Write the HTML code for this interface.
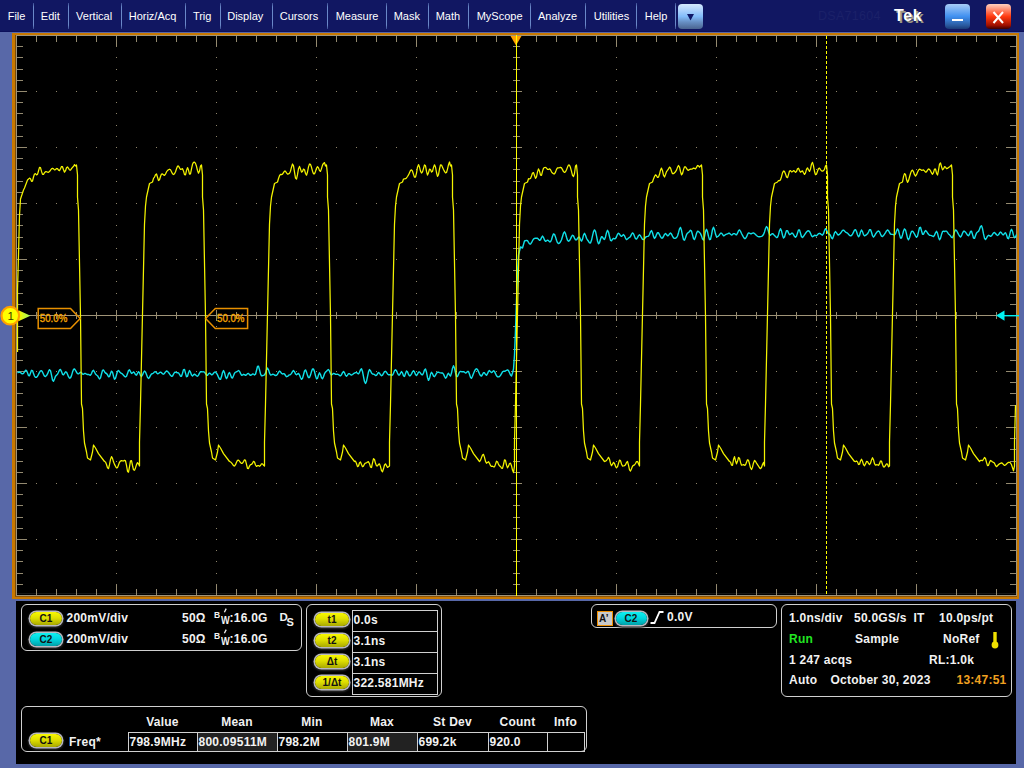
<!DOCTYPE html>
<html><head><meta charset="utf-8"><style>
*{margin:0;padding:0;box-sizing:border-box}
html,body{width:1024px;height:768px;overflow:hidden;background:#5868a8;font-family:"Liberation Sans",sans-serif}
#menu{position:absolute;left:0;top:0;width:1024px;height:32px;background:#111762;border-bottom:1px solid #0c105a}
.mi{position:absolute;top:10.5px;font-size:11px;line-height:11px;color:#fff;white-space:nowrap}
.sep{position:absolute;top:3px;width:1px;height:26px;background:linear-gradient(#3a4a90,#6a88c8 15%,#6a88c8 85%,#3a4a90)}
#panel{position:absolute;left:16px;top:601px;width:1000px;height:163px;background:#000}
.box{position:absolute;border:1px solid #d0d0d0;border-radius:6px}
.t{position:absolute;font-size:12px;line-height:12px;font-weight:bold;color:#f2f2f2;white-space:nowrap;letter-spacing:0.25px}
.badge{position:absolute;border-radius:8px;text-align:center;font-weight:bold;color:#111;box-shadow:0 0 0 1.5px #b8b8c0, 0 1px 2px 2px #2a2a2a}
.by{background:linear-gradient(#f8f800,#e0e000 45%,#a8a800)}
.bc{background:linear-gradient(#10f0f0,#00d8e0 45%,#00a0a8)}
.cell{position:absolute;border:1px solid #d0d0d0}
</style></head><body>
<div id="menu"><div class="mi" style="left:7.7px">File</div><div class="mi" style="left:40.8px">Edit</div><div class="mi" style="left:76.1px">Vertical</div><div class="mi" style="left:128.7px">Horiz/Acq</div><div class="mi" style="left:192.9px">Trig</div><div class="mi" style="left:227.2px">Display</div><div class="mi" style="left:279.7px">Cursors</div><div class="mi" style="left:335.7px">Measure</div><div class="mi" style="left:393.7px">Mask</div><div class="mi" style="left:435.7px">Math</div><div class="mi" style="left:476.7px">MyScope</div><div class="mi" style="left:538.0px">Analyze</div><div class="mi" style="left:593.7px">Utilities</div><div class="mi" style="left:644.7px">Help</div><div class="sep" style="left:33px"></div><div class="sep" style="left:68px"></div><div class="sep" style="left:121px"></div><div class="sep" style="left:185px"></div><div class="sep" style="left:220px"></div><div class="sep" style="left:272px"></div><div class="sep" style="left:327px"></div><div class="sep" style="left:386px"></div><div class="sep" style="left:428px"></div><div class="sep" style="left:468px"></div><div class="sep" style="left:530px"></div><div class="sep" style="left:585px"></div><div class="sep" style="left:636px"></div><div class="sep" style="left:675px"></div>
<div style="position:absolute;left:818px;top:10px;font-size:12.5px;line-height:12px;color:#1b2169;letter-spacing:0.3px">DSA71604</div>
<div style="position:absolute;left:896px;top:10.5px;font-size:16px;line-height:14px;font-weight:bold;color:#9c9884;letter-spacing:0.6px">Tek</div>
<div style="position:absolute;left:894px;top:8.5px;font-size:16px;line-height:14px;font-weight:bold;color:#fff;letter-spacing:0.6px">Tek</div>
<div style="position:absolute;left:678px;top:4px;width:25px;height:25px;border-radius:4px;background:linear-gradient(#d4eafe,#a6cefc 30%,#82bcfa 50%,#6890c4 72%,#4a6490)"></div>
<svg style="position:absolute;left:678px;top:4px" width="25" height="25"><path d="M9,10 H16 L12.5,16.5 Z" fill="#101868"/></svg>
<div style="position:absolute;left:945px;top:4px;width:25px;height:25px;border-radius:4px;background:linear-gradient(#a8ccf8,#4090f0 50%,#2a5aa0 85%,#1a3a78)"></div>
<div style="position:absolute;left:952px;top:19px;width:11px;height:2.4px;background:#fff"></div>
<div style="position:absolute;left:986px;top:4px;width:25px;height:25px;border-radius:4px;background:linear-gradient(#ffd0c0,#ff3a10 50%,#a01000 85%,#400000)"></div>
<svg style="position:absolute;left:986px;top:4px" width="25" height="25"><path d="M7.5,8 L17,19 M17,8 L7.5,19" stroke="#fff" stroke-width="2"/></svg>
</div>
<svg width="1024" height="768" style="position:absolute;left:0;top:0">
<rect x="12" y="33" width="1007" height="566" fill="#c87800"/>
<rect x="15" y="35" width="1" height="562" fill="#7a4a08"/>
<rect x="15" y="596" width="1002" height="1" fill="#8a5208"/>
<rect x="16" y="35" width="1001" height="561" fill="#000"/>
<g shape-rendering="crispEdges"><rect x="16" y="35" width="1001" height="1" fill="#a09478"/>
<rect x="16" y="595" width="1001" height="1" fill="#a09478"/>
<rect x="16" y="35" width="1" height="561" fill="#a09478"/>
<rect x="1016" y="35" width="1" height="561" fill="#a09478"/>
<rect x="17" y="593" width="999" height="1" fill="#161616"/>
<rect x="16" y="315" width="1001" height="1" fill="#a09478"/>
<rect x="516" y="35" width="1" height="561" fill="#a09478"/>
<rect x="36" y="36" width="1" height="6" fill="#948a70"/>
<rect x="36" y="589" width="1" height="6" fill="#948a70"/>
<rect x="36" y="312" width="1" height="7" fill="#948a70"/>
<rect x="56" y="36" width="1" height="6" fill="#948a70"/>
<rect x="56" y="589" width="1" height="6" fill="#948a70"/>
<rect x="56" y="312" width="1" height="7" fill="#948a70"/>
<rect x="76" y="36" width="1" height="6" fill="#948a70"/>
<rect x="76" y="589" width="1" height="6" fill="#948a70"/>
<rect x="76" y="312" width="1" height="7" fill="#948a70"/>
<rect x="96" y="36" width="1" height="6" fill="#948a70"/>
<rect x="96" y="589" width="1" height="6" fill="#948a70"/>
<rect x="96" y="312" width="1" height="7" fill="#948a70"/>
<rect x="116" y="36" width="1" height="10" fill="#948a70"/>
<rect x="116" y="585" width="1" height="10" fill="#948a70"/>
<rect x="116" y="310" width="1" height="11" fill="#948a70"/>
<rect x="136" y="36" width="1" height="6" fill="#948a70"/>
<rect x="136" y="589" width="1" height="6" fill="#948a70"/>
<rect x="136" y="312" width="1" height="7" fill="#948a70"/>
<rect x="156" y="36" width="1" height="6" fill="#948a70"/>
<rect x="156" y="589" width="1" height="6" fill="#948a70"/>
<rect x="156" y="312" width="1" height="7" fill="#948a70"/>
<rect x="176" y="36" width="1" height="6" fill="#948a70"/>
<rect x="176" y="589" width="1" height="6" fill="#948a70"/>
<rect x="176" y="312" width="1" height="7" fill="#948a70"/>
<rect x="196" y="36" width="1" height="6" fill="#948a70"/>
<rect x="196" y="589" width="1" height="6" fill="#948a70"/>
<rect x="196" y="312" width="1" height="7" fill="#948a70"/>
<rect x="216" y="36" width="1" height="10" fill="#948a70"/>
<rect x="216" y="585" width="1" height="10" fill="#948a70"/>
<rect x="216" y="310" width="1" height="11" fill="#948a70"/>
<rect x="236" y="36" width="1" height="6" fill="#948a70"/>
<rect x="236" y="589" width="1" height="6" fill="#948a70"/>
<rect x="236" y="312" width="1" height="7" fill="#948a70"/>
<rect x="256" y="36" width="1" height="6" fill="#948a70"/>
<rect x="256" y="589" width="1" height="6" fill="#948a70"/>
<rect x="256" y="312" width="1" height="7" fill="#948a70"/>
<rect x="276" y="36" width="1" height="6" fill="#948a70"/>
<rect x="276" y="589" width="1" height="6" fill="#948a70"/>
<rect x="276" y="312" width="1" height="7" fill="#948a70"/>
<rect x="296" y="36" width="1" height="6" fill="#948a70"/>
<rect x="296" y="589" width="1" height="6" fill="#948a70"/>
<rect x="296" y="312" width="1" height="7" fill="#948a70"/>
<rect x="316" y="36" width="1" height="10" fill="#948a70"/>
<rect x="316" y="585" width="1" height="10" fill="#948a70"/>
<rect x="316" y="310" width="1" height="11" fill="#948a70"/>
<rect x="336" y="36" width="1" height="6" fill="#948a70"/>
<rect x="336" y="589" width="1" height="6" fill="#948a70"/>
<rect x="336" y="312" width="1" height="7" fill="#948a70"/>
<rect x="356" y="36" width="1" height="6" fill="#948a70"/>
<rect x="356" y="589" width="1" height="6" fill="#948a70"/>
<rect x="356" y="312" width="1" height="7" fill="#948a70"/>
<rect x="376" y="36" width="1" height="6" fill="#948a70"/>
<rect x="376" y="589" width="1" height="6" fill="#948a70"/>
<rect x="376" y="312" width="1" height="7" fill="#948a70"/>
<rect x="396" y="36" width="1" height="6" fill="#948a70"/>
<rect x="396" y="589" width="1" height="6" fill="#948a70"/>
<rect x="396" y="312" width="1" height="7" fill="#948a70"/>
<rect x="416" y="36" width="1" height="10" fill="#948a70"/>
<rect x="416" y="585" width="1" height="10" fill="#948a70"/>
<rect x="416" y="310" width="1" height="11" fill="#948a70"/>
<rect x="436" y="36" width="1" height="6" fill="#948a70"/>
<rect x="436" y="589" width="1" height="6" fill="#948a70"/>
<rect x="436" y="312" width="1" height="7" fill="#948a70"/>
<rect x="456" y="36" width="1" height="6" fill="#948a70"/>
<rect x="456" y="589" width="1" height="6" fill="#948a70"/>
<rect x="456" y="312" width="1" height="7" fill="#948a70"/>
<rect x="476" y="36" width="1" height="6" fill="#948a70"/>
<rect x="476" y="589" width="1" height="6" fill="#948a70"/>
<rect x="476" y="312" width="1" height="7" fill="#948a70"/>
<rect x="496" y="36" width="1" height="6" fill="#948a70"/>
<rect x="496" y="589" width="1" height="6" fill="#948a70"/>
<rect x="496" y="312" width="1" height="7" fill="#948a70"/>
<rect x="516" y="36" width="1" height="10" fill="#948a70"/>
<rect x="516" y="585" width="1" height="10" fill="#948a70"/>
<rect x="536" y="36" width="1" height="6" fill="#948a70"/>
<rect x="536" y="589" width="1" height="6" fill="#948a70"/>
<rect x="536" y="312" width="1" height="7" fill="#948a70"/>
<rect x="556" y="36" width="1" height="6" fill="#948a70"/>
<rect x="556" y="589" width="1" height="6" fill="#948a70"/>
<rect x="556" y="312" width="1" height="7" fill="#948a70"/>
<rect x="576" y="36" width="1" height="6" fill="#948a70"/>
<rect x="576" y="589" width="1" height="6" fill="#948a70"/>
<rect x="576" y="312" width="1" height="7" fill="#948a70"/>
<rect x="596" y="36" width="1" height="6" fill="#948a70"/>
<rect x="596" y="589" width="1" height="6" fill="#948a70"/>
<rect x="596" y="312" width="1" height="7" fill="#948a70"/>
<rect x="616" y="36" width="1" height="10" fill="#948a70"/>
<rect x="616" y="585" width="1" height="10" fill="#948a70"/>
<rect x="616" y="310" width="1" height="11" fill="#948a70"/>
<rect x="636" y="36" width="1" height="6" fill="#948a70"/>
<rect x="636" y="589" width="1" height="6" fill="#948a70"/>
<rect x="636" y="312" width="1" height="7" fill="#948a70"/>
<rect x="656" y="36" width="1" height="6" fill="#948a70"/>
<rect x="656" y="589" width="1" height="6" fill="#948a70"/>
<rect x="656" y="312" width="1" height="7" fill="#948a70"/>
<rect x="676" y="36" width="1" height="6" fill="#948a70"/>
<rect x="676" y="589" width="1" height="6" fill="#948a70"/>
<rect x="676" y="312" width="1" height="7" fill="#948a70"/>
<rect x="696" y="36" width="1" height="6" fill="#948a70"/>
<rect x="696" y="589" width="1" height="6" fill="#948a70"/>
<rect x="696" y="312" width="1" height="7" fill="#948a70"/>
<rect x="716" y="36" width="1" height="10" fill="#948a70"/>
<rect x="716" y="585" width="1" height="10" fill="#948a70"/>
<rect x="716" y="310" width="1" height="11" fill="#948a70"/>
<rect x="736" y="36" width="1" height="6" fill="#948a70"/>
<rect x="736" y="589" width="1" height="6" fill="#948a70"/>
<rect x="736" y="312" width="1" height="7" fill="#948a70"/>
<rect x="756" y="36" width="1" height="6" fill="#948a70"/>
<rect x="756" y="589" width="1" height="6" fill="#948a70"/>
<rect x="756" y="312" width="1" height="7" fill="#948a70"/>
<rect x="776" y="36" width="1" height="6" fill="#948a70"/>
<rect x="776" y="589" width="1" height="6" fill="#948a70"/>
<rect x="776" y="312" width="1" height="7" fill="#948a70"/>
<rect x="796" y="36" width="1" height="6" fill="#948a70"/>
<rect x="796" y="589" width="1" height="6" fill="#948a70"/>
<rect x="796" y="312" width="1" height="7" fill="#948a70"/>
<rect x="816" y="36" width="1" height="10" fill="#948a70"/>
<rect x="816" y="585" width="1" height="10" fill="#948a70"/>
<rect x="816" y="310" width="1" height="11" fill="#948a70"/>
<rect x="836" y="36" width="1" height="6" fill="#948a70"/>
<rect x="836" y="589" width="1" height="6" fill="#948a70"/>
<rect x="836" y="312" width="1" height="7" fill="#948a70"/>
<rect x="856" y="36" width="1" height="6" fill="#948a70"/>
<rect x="856" y="589" width="1" height="6" fill="#948a70"/>
<rect x="856" y="312" width="1" height="7" fill="#948a70"/>
<rect x="876" y="36" width="1" height="6" fill="#948a70"/>
<rect x="876" y="589" width="1" height="6" fill="#948a70"/>
<rect x="876" y="312" width="1" height="7" fill="#948a70"/>
<rect x="896" y="36" width="1" height="6" fill="#948a70"/>
<rect x="896" y="589" width="1" height="6" fill="#948a70"/>
<rect x="896" y="312" width="1" height="7" fill="#948a70"/>
<rect x="916" y="36" width="1" height="10" fill="#948a70"/>
<rect x="916" y="585" width="1" height="10" fill="#948a70"/>
<rect x="916" y="310" width="1" height="11" fill="#948a70"/>
<rect x="936" y="36" width="1" height="6" fill="#948a70"/>
<rect x="936" y="589" width="1" height="6" fill="#948a70"/>
<rect x="936" y="312" width="1" height="7" fill="#948a70"/>
<rect x="956" y="36" width="1" height="6" fill="#948a70"/>
<rect x="956" y="589" width="1" height="6" fill="#948a70"/>
<rect x="956" y="312" width="1" height="7" fill="#948a70"/>
<rect x="976" y="36" width="1" height="6" fill="#948a70"/>
<rect x="976" y="589" width="1" height="6" fill="#948a70"/>
<rect x="976" y="312" width="1" height="7" fill="#948a70"/>
<rect x="996" y="36" width="1" height="6" fill="#948a70"/>
<rect x="996" y="589" width="1" height="6" fill="#948a70"/>
<rect x="996" y="312" width="1" height="7" fill="#948a70"/>
<rect x="17" y="46" width="6" height="1" fill="#948a70"/>
<rect x="1010" y="46" width="6" height="1" fill="#948a70"/>
<rect x="513" y="46" width="7" height="1" fill="#948a70"/>
<rect x="17" y="57" width="6" height="1" fill="#948a70"/>
<rect x="1010" y="57" width="6" height="1" fill="#948a70"/>
<rect x="513" y="57" width="7" height="1" fill="#948a70"/>
<rect x="17" y="69" width="6" height="1" fill="#948a70"/>
<rect x="1010" y="69" width="6" height="1" fill="#948a70"/>
<rect x="513" y="69" width="7" height="1" fill="#948a70"/>
<rect x="17" y="80" width="6" height="1" fill="#948a70"/>
<rect x="1010" y="80" width="6" height="1" fill="#948a70"/>
<rect x="513" y="80" width="7" height="1" fill="#948a70"/>
<rect x="17" y="91" width="10" height="1" fill="#948a70"/>
<rect x="1006" y="91" width="10" height="1" fill="#948a70"/>
<rect x="511" y="91" width="11" height="1" fill="#948a70"/>
<rect x="17" y="102" width="6" height="1" fill="#948a70"/>
<rect x="1010" y="102" width="6" height="1" fill="#948a70"/>
<rect x="513" y="102" width="7" height="1" fill="#948a70"/>
<rect x="17" y="113" width="6" height="1" fill="#948a70"/>
<rect x="1010" y="113" width="6" height="1" fill="#948a70"/>
<rect x="513" y="113" width="7" height="1" fill="#948a70"/>
<rect x="17" y="125" width="6" height="1" fill="#948a70"/>
<rect x="1010" y="125" width="6" height="1" fill="#948a70"/>
<rect x="513" y="125" width="7" height="1" fill="#948a70"/>
<rect x="17" y="136" width="6" height="1" fill="#948a70"/>
<rect x="1010" y="136" width="6" height="1" fill="#948a70"/>
<rect x="513" y="136" width="7" height="1" fill="#948a70"/>
<rect x="17" y="147" width="10" height="1" fill="#948a70"/>
<rect x="1006" y="147" width="10" height="1" fill="#948a70"/>
<rect x="511" y="147" width="11" height="1" fill="#948a70"/>
<rect x="17" y="158" width="6" height="1" fill="#948a70"/>
<rect x="1010" y="158" width="6" height="1" fill="#948a70"/>
<rect x="513" y="158" width="7" height="1" fill="#948a70"/>
<rect x="17" y="169" width="6" height="1" fill="#948a70"/>
<rect x="1010" y="169" width="6" height="1" fill="#948a70"/>
<rect x="513" y="169" width="7" height="1" fill="#948a70"/>
<rect x="17" y="181" width="6" height="1" fill="#948a70"/>
<rect x="1010" y="181" width="6" height="1" fill="#948a70"/>
<rect x="513" y="181" width="7" height="1" fill="#948a70"/>
<rect x="17" y="192" width="6" height="1" fill="#948a70"/>
<rect x="1010" y="192" width="6" height="1" fill="#948a70"/>
<rect x="513" y="192" width="7" height="1" fill="#948a70"/>
<rect x="17" y="203" width="10" height="1" fill="#948a70"/>
<rect x="1006" y="203" width="10" height="1" fill="#948a70"/>
<rect x="511" y="203" width="11" height="1" fill="#948a70"/>
<rect x="17" y="214" width="6" height="1" fill="#948a70"/>
<rect x="1010" y="214" width="6" height="1" fill="#948a70"/>
<rect x="513" y="214" width="7" height="1" fill="#948a70"/>
<rect x="17" y="225" width="6" height="1" fill="#948a70"/>
<rect x="1010" y="225" width="6" height="1" fill="#948a70"/>
<rect x="513" y="225" width="7" height="1" fill="#948a70"/>
<rect x="17" y="237" width="6" height="1" fill="#948a70"/>
<rect x="1010" y="237" width="6" height="1" fill="#948a70"/>
<rect x="513" y="237" width="7" height="1" fill="#948a70"/>
<rect x="17" y="248" width="6" height="1" fill="#948a70"/>
<rect x="1010" y="248" width="6" height="1" fill="#948a70"/>
<rect x="513" y="248" width="7" height="1" fill="#948a70"/>
<rect x="17" y="259" width="10" height="1" fill="#948a70"/>
<rect x="1006" y="259" width="10" height="1" fill="#948a70"/>
<rect x="511" y="259" width="11" height="1" fill="#948a70"/>
<rect x="17" y="270" width="6" height="1" fill="#948a70"/>
<rect x="1010" y="270" width="6" height="1" fill="#948a70"/>
<rect x="513" y="270" width="7" height="1" fill="#948a70"/>
<rect x="17" y="281" width="6" height="1" fill="#948a70"/>
<rect x="1010" y="281" width="6" height="1" fill="#948a70"/>
<rect x="513" y="281" width="7" height="1" fill="#948a70"/>
<rect x="17" y="293" width="6" height="1" fill="#948a70"/>
<rect x="1010" y="293" width="6" height="1" fill="#948a70"/>
<rect x="513" y="293" width="7" height="1" fill="#948a70"/>
<rect x="17" y="304" width="6" height="1" fill="#948a70"/>
<rect x="1010" y="304" width="6" height="1" fill="#948a70"/>
<rect x="513" y="304" width="7" height="1" fill="#948a70"/>
<rect x="17" y="315" width="10" height="1" fill="#948a70"/>
<rect x="1006" y="315" width="10" height="1" fill="#948a70"/>
<rect x="17" y="326" width="6" height="1" fill="#948a70"/>
<rect x="1010" y="326" width="6" height="1" fill="#948a70"/>
<rect x="513" y="326" width="7" height="1" fill="#948a70"/>
<rect x="17" y="337" width="6" height="1" fill="#948a70"/>
<rect x="1010" y="337" width="6" height="1" fill="#948a70"/>
<rect x="513" y="337" width="7" height="1" fill="#948a70"/>
<rect x="17" y="349" width="6" height="1" fill="#948a70"/>
<rect x="1010" y="349" width="6" height="1" fill="#948a70"/>
<rect x="513" y="349" width="7" height="1" fill="#948a70"/>
<rect x="17" y="360" width="6" height="1" fill="#948a70"/>
<rect x="1010" y="360" width="6" height="1" fill="#948a70"/>
<rect x="513" y="360" width="7" height="1" fill="#948a70"/>
<rect x="17" y="371" width="10" height="1" fill="#948a70"/>
<rect x="1006" y="371" width="10" height="1" fill="#948a70"/>
<rect x="511" y="371" width="11" height="1" fill="#948a70"/>
<rect x="17" y="382" width="6" height="1" fill="#948a70"/>
<rect x="1010" y="382" width="6" height="1" fill="#948a70"/>
<rect x="513" y="382" width="7" height="1" fill="#948a70"/>
<rect x="17" y="393" width="6" height="1" fill="#948a70"/>
<rect x="1010" y="393" width="6" height="1" fill="#948a70"/>
<rect x="513" y="393" width="7" height="1" fill="#948a70"/>
<rect x="17" y="405" width="6" height="1" fill="#948a70"/>
<rect x="1010" y="405" width="6" height="1" fill="#948a70"/>
<rect x="513" y="405" width="7" height="1" fill="#948a70"/>
<rect x="17" y="416" width="6" height="1" fill="#948a70"/>
<rect x="1010" y="416" width="6" height="1" fill="#948a70"/>
<rect x="513" y="416" width="7" height="1" fill="#948a70"/>
<rect x="17" y="427" width="10" height="1" fill="#948a70"/>
<rect x="1006" y="427" width="10" height="1" fill="#948a70"/>
<rect x="511" y="427" width="11" height="1" fill="#948a70"/>
<rect x="17" y="438" width="6" height="1" fill="#948a70"/>
<rect x="1010" y="438" width="6" height="1" fill="#948a70"/>
<rect x="513" y="438" width="7" height="1" fill="#948a70"/>
<rect x="17" y="449" width="6" height="1" fill="#948a70"/>
<rect x="1010" y="449" width="6" height="1" fill="#948a70"/>
<rect x="513" y="449" width="7" height="1" fill="#948a70"/>
<rect x="17" y="461" width="6" height="1" fill="#948a70"/>
<rect x="1010" y="461" width="6" height="1" fill="#948a70"/>
<rect x="513" y="461" width="7" height="1" fill="#948a70"/>
<rect x="17" y="472" width="6" height="1" fill="#948a70"/>
<rect x="1010" y="472" width="6" height="1" fill="#948a70"/>
<rect x="513" y="472" width="7" height="1" fill="#948a70"/>
<rect x="17" y="483" width="10" height="1" fill="#948a70"/>
<rect x="1006" y="483" width="10" height="1" fill="#948a70"/>
<rect x="511" y="483" width="11" height="1" fill="#948a70"/>
<rect x="17" y="494" width="6" height="1" fill="#948a70"/>
<rect x="1010" y="494" width="6" height="1" fill="#948a70"/>
<rect x="513" y="494" width="7" height="1" fill="#948a70"/>
<rect x="17" y="505" width="6" height="1" fill="#948a70"/>
<rect x="1010" y="505" width="6" height="1" fill="#948a70"/>
<rect x="513" y="505" width="7" height="1" fill="#948a70"/>
<rect x="17" y="517" width="6" height="1" fill="#948a70"/>
<rect x="1010" y="517" width="6" height="1" fill="#948a70"/>
<rect x="513" y="517" width="7" height="1" fill="#948a70"/>
<rect x="17" y="528" width="6" height="1" fill="#948a70"/>
<rect x="1010" y="528" width="6" height="1" fill="#948a70"/>
<rect x="513" y="528" width="7" height="1" fill="#948a70"/>
<rect x="17" y="539" width="10" height="1" fill="#948a70"/>
<rect x="1006" y="539" width="10" height="1" fill="#948a70"/>
<rect x="511" y="539" width="11" height="1" fill="#948a70"/>
<rect x="17" y="550" width="6" height="1" fill="#948a70"/>
<rect x="1010" y="550" width="6" height="1" fill="#948a70"/>
<rect x="513" y="550" width="7" height="1" fill="#948a70"/>
<rect x="17" y="561" width="6" height="1" fill="#948a70"/>
<rect x="1010" y="561" width="6" height="1" fill="#948a70"/>
<rect x="513" y="561" width="7" height="1" fill="#948a70"/>
<rect x="17" y="573" width="6" height="1" fill="#948a70"/>
<rect x="1010" y="573" width="6" height="1" fill="#948a70"/>
<rect x="513" y="573" width="7" height="1" fill="#948a70"/>
<rect x="17" y="584" width="6" height="1" fill="#948a70"/>
<rect x="1010" y="584" width="6" height="1" fill="#948a70"/>
<rect x="513" y="584" width="7" height="1" fill="#948a70"/><path fill="#8e846a" d="M116 46h1v1h-1zM116 57h1v1h-1zM116 69h1v1h-1zM116 80h1v1h-1zM116 91h1v1h-1zM116 102h1v1h-1zM116 113h1v1h-1zM116 125h1v1h-1zM116 136h1v1h-1zM116 147h1v1h-1zM116 158h1v1h-1zM116 169h1v1h-1zM116 181h1v1h-1zM116 192h1v1h-1zM116 203h1v1h-1zM116 214h1v1h-1zM116 225h1v1h-1zM116 237h1v1h-1zM116 248h1v1h-1zM116 259h1v1h-1zM116 270h1v1h-1zM116 281h1v1h-1zM116 293h1v1h-1zM116 304h1v1h-1zM116 326h1v1h-1zM116 337h1v1h-1zM116 349h1v1h-1zM116 360h1v1h-1zM116 371h1v1h-1zM116 382h1v1h-1zM116 393h1v1h-1zM116 405h1v1h-1zM116 416h1v1h-1zM116 427h1v1h-1zM116 438h1v1h-1zM116 449h1v1h-1zM116 461h1v1h-1zM116 472h1v1h-1zM116 483h1v1h-1zM116 494h1v1h-1zM116 505h1v1h-1zM116 517h1v1h-1zM116 528h1v1h-1zM116 539h1v1h-1zM116 550h1v1h-1zM116 561h1v1h-1zM116 573h1v1h-1zM116 584h1v1h-1zM216 46h1v1h-1zM216 57h1v1h-1zM216 69h1v1h-1zM216 80h1v1h-1zM216 91h1v1h-1zM216 102h1v1h-1zM216 113h1v1h-1zM216 125h1v1h-1zM216 136h1v1h-1zM216 147h1v1h-1zM216 158h1v1h-1zM216 169h1v1h-1zM216 181h1v1h-1zM216 192h1v1h-1zM216 203h1v1h-1zM216 214h1v1h-1zM216 225h1v1h-1zM216 237h1v1h-1zM216 248h1v1h-1zM216 259h1v1h-1zM216 270h1v1h-1zM216 281h1v1h-1zM216 293h1v1h-1zM216 304h1v1h-1zM216 326h1v1h-1zM216 337h1v1h-1zM216 349h1v1h-1zM216 360h1v1h-1zM216 371h1v1h-1zM216 382h1v1h-1zM216 393h1v1h-1zM216 405h1v1h-1zM216 416h1v1h-1zM216 427h1v1h-1zM216 438h1v1h-1zM216 449h1v1h-1zM216 461h1v1h-1zM216 472h1v1h-1zM216 483h1v1h-1zM216 494h1v1h-1zM216 505h1v1h-1zM216 517h1v1h-1zM216 528h1v1h-1zM216 539h1v1h-1zM216 550h1v1h-1zM216 561h1v1h-1zM216 573h1v1h-1zM216 584h1v1h-1zM316 46h1v1h-1zM316 57h1v1h-1zM316 69h1v1h-1zM316 80h1v1h-1zM316 91h1v1h-1zM316 102h1v1h-1zM316 113h1v1h-1zM316 125h1v1h-1zM316 136h1v1h-1zM316 147h1v1h-1zM316 158h1v1h-1zM316 169h1v1h-1zM316 181h1v1h-1zM316 192h1v1h-1zM316 203h1v1h-1zM316 214h1v1h-1zM316 225h1v1h-1zM316 237h1v1h-1zM316 248h1v1h-1zM316 259h1v1h-1zM316 270h1v1h-1zM316 281h1v1h-1zM316 293h1v1h-1zM316 304h1v1h-1zM316 326h1v1h-1zM316 337h1v1h-1zM316 349h1v1h-1zM316 360h1v1h-1zM316 371h1v1h-1zM316 382h1v1h-1zM316 393h1v1h-1zM316 405h1v1h-1zM316 416h1v1h-1zM316 427h1v1h-1zM316 438h1v1h-1zM316 449h1v1h-1zM316 461h1v1h-1zM316 472h1v1h-1zM316 483h1v1h-1zM316 494h1v1h-1zM316 505h1v1h-1zM316 517h1v1h-1zM316 528h1v1h-1zM316 539h1v1h-1zM316 550h1v1h-1zM316 561h1v1h-1zM316 573h1v1h-1zM316 584h1v1h-1zM416 46h1v1h-1zM416 57h1v1h-1zM416 69h1v1h-1zM416 80h1v1h-1zM416 91h1v1h-1zM416 102h1v1h-1zM416 113h1v1h-1zM416 125h1v1h-1zM416 136h1v1h-1zM416 147h1v1h-1zM416 158h1v1h-1zM416 169h1v1h-1zM416 181h1v1h-1zM416 192h1v1h-1zM416 203h1v1h-1zM416 214h1v1h-1zM416 225h1v1h-1zM416 237h1v1h-1zM416 248h1v1h-1zM416 259h1v1h-1zM416 270h1v1h-1zM416 281h1v1h-1zM416 293h1v1h-1zM416 304h1v1h-1zM416 326h1v1h-1zM416 337h1v1h-1zM416 349h1v1h-1zM416 360h1v1h-1zM416 371h1v1h-1zM416 382h1v1h-1zM416 393h1v1h-1zM416 405h1v1h-1zM416 416h1v1h-1zM416 427h1v1h-1zM416 438h1v1h-1zM416 449h1v1h-1zM416 461h1v1h-1zM416 472h1v1h-1zM416 483h1v1h-1zM416 494h1v1h-1zM416 505h1v1h-1zM416 517h1v1h-1zM416 528h1v1h-1zM416 539h1v1h-1zM416 550h1v1h-1zM416 561h1v1h-1zM416 573h1v1h-1zM416 584h1v1h-1zM616 46h1v1h-1zM616 57h1v1h-1zM616 69h1v1h-1zM616 80h1v1h-1zM616 91h1v1h-1zM616 102h1v1h-1zM616 113h1v1h-1zM616 125h1v1h-1zM616 136h1v1h-1zM616 147h1v1h-1zM616 158h1v1h-1zM616 169h1v1h-1zM616 181h1v1h-1zM616 192h1v1h-1zM616 203h1v1h-1zM616 214h1v1h-1zM616 225h1v1h-1zM616 237h1v1h-1zM616 248h1v1h-1zM616 259h1v1h-1zM616 270h1v1h-1zM616 281h1v1h-1zM616 293h1v1h-1zM616 304h1v1h-1zM616 326h1v1h-1zM616 337h1v1h-1zM616 349h1v1h-1zM616 360h1v1h-1zM616 371h1v1h-1zM616 382h1v1h-1zM616 393h1v1h-1zM616 405h1v1h-1zM616 416h1v1h-1zM616 427h1v1h-1zM616 438h1v1h-1zM616 449h1v1h-1zM616 461h1v1h-1zM616 472h1v1h-1zM616 483h1v1h-1zM616 494h1v1h-1zM616 505h1v1h-1zM616 517h1v1h-1zM616 528h1v1h-1zM616 539h1v1h-1zM616 550h1v1h-1zM616 561h1v1h-1zM616 573h1v1h-1zM616 584h1v1h-1zM716 46h1v1h-1zM716 57h1v1h-1zM716 69h1v1h-1zM716 80h1v1h-1zM716 91h1v1h-1zM716 102h1v1h-1zM716 113h1v1h-1zM716 125h1v1h-1zM716 136h1v1h-1zM716 147h1v1h-1zM716 158h1v1h-1zM716 169h1v1h-1zM716 181h1v1h-1zM716 192h1v1h-1zM716 203h1v1h-1zM716 214h1v1h-1zM716 225h1v1h-1zM716 237h1v1h-1zM716 248h1v1h-1zM716 259h1v1h-1zM716 270h1v1h-1zM716 281h1v1h-1zM716 293h1v1h-1zM716 304h1v1h-1zM716 326h1v1h-1zM716 337h1v1h-1zM716 349h1v1h-1zM716 360h1v1h-1zM716 371h1v1h-1zM716 382h1v1h-1zM716 393h1v1h-1zM716 405h1v1h-1zM716 416h1v1h-1zM716 427h1v1h-1zM716 438h1v1h-1zM716 449h1v1h-1zM716 461h1v1h-1zM716 472h1v1h-1zM716 483h1v1h-1zM716 494h1v1h-1zM716 505h1v1h-1zM716 517h1v1h-1zM716 528h1v1h-1zM716 539h1v1h-1zM716 550h1v1h-1zM716 561h1v1h-1zM716 573h1v1h-1zM716 584h1v1h-1zM816 46h1v1h-1zM816 57h1v1h-1zM816 69h1v1h-1zM816 80h1v1h-1zM816 91h1v1h-1zM816 102h1v1h-1zM816 113h1v1h-1zM816 125h1v1h-1zM816 136h1v1h-1zM816 147h1v1h-1zM816 158h1v1h-1zM816 169h1v1h-1zM816 181h1v1h-1zM816 192h1v1h-1zM816 203h1v1h-1zM816 214h1v1h-1zM816 225h1v1h-1zM816 237h1v1h-1zM816 248h1v1h-1zM816 259h1v1h-1zM816 270h1v1h-1zM816 281h1v1h-1zM816 293h1v1h-1zM816 304h1v1h-1zM816 326h1v1h-1zM816 337h1v1h-1zM816 349h1v1h-1zM816 360h1v1h-1zM816 371h1v1h-1zM816 382h1v1h-1zM816 393h1v1h-1zM816 405h1v1h-1zM816 416h1v1h-1zM816 427h1v1h-1zM816 438h1v1h-1zM816 449h1v1h-1zM816 461h1v1h-1zM816 472h1v1h-1zM816 483h1v1h-1zM816 494h1v1h-1zM816 505h1v1h-1zM816 517h1v1h-1zM816 528h1v1h-1zM816 539h1v1h-1zM816 550h1v1h-1zM816 561h1v1h-1zM816 573h1v1h-1zM816 584h1v1h-1zM916 46h1v1h-1zM916 57h1v1h-1zM916 69h1v1h-1zM916 80h1v1h-1zM916 91h1v1h-1zM916 102h1v1h-1zM916 113h1v1h-1zM916 125h1v1h-1zM916 136h1v1h-1zM916 147h1v1h-1zM916 158h1v1h-1zM916 169h1v1h-1zM916 181h1v1h-1zM916 192h1v1h-1zM916 203h1v1h-1zM916 214h1v1h-1zM916 225h1v1h-1zM916 237h1v1h-1zM916 248h1v1h-1zM916 259h1v1h-1zM916 270h1v1h-1zM916 281h1v1h-1zM916 293h1v1h-1zM916 304h1v1h-1zM916 326h1v1h-1zM916 337h1v1h-1zM916 349h1v1h-1zM916 360h1v1h-1zM916 371h1v1h-1zM916 382h1v1h-1zM916 393h1v1h-1zM916 405h1v1h-1zM916 416h1v1h-1zM916 427h1v1h-1zM916 438h1v1h-1zM916 449h1v1h-1zM916 461h1v1h-1zM916 472h1v1h-1zM916 483h1v1h-1zM916 494h1v1h-1zM916 505h1v1h-1zM916 517h1v1h-1zM916 528h1v1h-1zM916 539h1v1h-1zM916 550h1v1h-1zM916 561h1v1h-1zM916 573h1v1h-1zM916 584h1v1h-1zM36 91h1v1h-1zM56 91h1v1h-1zM76 91h1v1h-1zM96 91h1v1h-1zM136 91h1v1h-1zM156 91h1v1h-1zM176 91h1v1h-1zM196 91h1v1h-1zM236 91h1v1h-1zM256 91h1v1h-1zM276 91h1v1h-1zM296 91h1v1h-1zM336 91h1v1h-1zM356 91h1v1h-1zM376 91h1v1h-1zM396 91h1v1h-1zM436 91h1v1h-1zM456 91h1v1h-1zM476 91h1v1h-1zM496 91h1v1h-1zM536 91h1v1h-1zM556 91h1v1h-1zM576 91h1v1h-1zM596 91h1v1h-1zM636 91h1v1h-1zM656 91h1v1h-1zM676 91h1v1h-1zM696 91h1v1h-1zM736 91h1v1h-1zM756 91h1v1h-1zM776 91h1v1h-1zM796 91h1v1h-1zM836 91h1v1h-1zM856 91h1v1h-1zM876 91h1v1h-1zM896 91h1v1h-1zM936 91h1v1h-1zM956 91h1v1h-1zM976 91h1v1h-1zM996 91h1v1h-1zM36 147h1v1h-1zM56 147h1v1h-1zM76 147h1v1h-1zM96 147h1v1h-1zM136 147h1v1h-1zM156 147h1v1h-1zM176 147h1v1h-1zM196 147h1v1h-1zM236 147h1v1h-1zM256 147h1v1h-1zM276 147h1v1h-1zM296 147h1v1h-1zM336 147h1v1h-1zM356 147h1v1h-1zM376 147h1v1h-1zM396 147h1v1h-1zM436 147h1v1h-1zM456 147h1v1h-1zM476 147h1v1h-1zM496 147h1v1h-1zM536 147h1v1h-1zM556 147h1v1h-1zM576 147h1v1h-1zM596 147h1v1h-1zM636 147h1v1h-1zM656 147h1v1h-1zM676 147h1v1h-1zM696 147h1v1h-1zM736 147h1v1h-1zM756 147h1v1h-1zM776 147h1v1h-1zM796 147h1v1h-1zM836 147h1v1h-1zM856 147h1v1h-1zM876 147h1v1h-1zM896 147h1v1h-1zM936 147h1v1h-1zM956 147h1v1h-1zM976 147h1v1h-1zM996 147h1v1h-1zM36 203h1v1h-1zM56 203h1v1h-1zM76 203h1v1h-1zM96 203h1v1h-1zM136 203h1v1h-1zM156 203h1v1h-1zM176 203h1v1h-1zM196 203h1v1h-1zM236 203h1v1h-1zM256 203h1v1h-1zM276 203h1v1h-1zM296 203h1v1h-1zM336 203h1v1h-1zM356 203h1v1h-1zM376 203h1v1h-1zM396 203h1v1h-1zM436 203h1v1h-1zM456 203h1v1h-1zM476 203h1v1h-1zM496 203h1v1h-1zM536 203h1v1h-1zM556 203h1v1h-1zM576 203h1v1h-1zM596 203h1v1h-1zM636 203h1v1h-1zM656 203h1v1h-1zM676 203h1v1h-1zM696 203h1v1h-1zM736 203h1v1h-1zM756 203h1v1h-1zM776 203h1v1h-1zM796 203h1v1h-1zM836 203h1v1h-1zM856 203h1v1h-1zM876 203h1v1h-1zM896 203h1v1h-1zM936 203h1v1h-1zM956 203h1v1h-1zM976 203h1v1h-1zM996 203h1v1h-1zM36 259h1v1h-1zM56 259h1v1h-1zM76 259h1v1h-1zM96 259h1v1h-1zM136 259h1v1h-1zM156 259h1v1h-1zM176 259h1v1h-1zM196 259h1v1h-1zM236 259h1v1h-1zM256 259h1v1h-1zM276 259h1v1h-1zM296 259h1v1h-1zM336 259h1v1h-1zM356 259h1v1h-1zM376 259h1v1h-1zM396 259h1v1h-1zM436 259h1v1h-1zM456 259h1v1h-1zM476 259h1v1h-1zM496 259h1v1h-1zM536 259h1v1h-1zM556 259h1v1h-1zM576 259h1v1h-1zM596 259h1v1h-1zM636 259h1v1h-1zM656 259h1v1h-1zM676 259h1v1h-1zM696 259h1v1h-1zM736 259h1v1h-1zM756 259h1v1h-1zM776 259h1v1h-1zM796 259h1v1h-1zM836 259h1v1h-1zM856 259h1v1h-1zM876 259h1v1h-1zM896 259h1v1h-1zM936 259h1v1h-1zM956 259h1v1h-1zM976 259h1v1h-1zM996 259h1v1h-1zM36 371h1v1h-1zM56 371h1v1h-1zM76 371h1v1h-1zM96 371h1v1h-1zM136 371h1v1h-1zM156 371h1v1h-1zM176 371h1v1h-1zM196 371h1v1h-1zM236 371h1v1h-1zM256 371h1v1h-1zM276 371h1v1h-1zM296 371h1v1h-1zM336 371h1v1h-1zM356 371h1v1h-1zM376 371h1v1h-1zM396 371h1v1h-1zM436 371h1v1h-1zM456 371h1v1h-1zM476 371h1v1h-1zM496 371h1v1h-1zM536 371h1v1h-1zM556 371h1v1h-1zM576 371h1v1h-1zM596 371h1v1h-1zM636 371h1v1h-1zM656 371h1v1h-1zM676 371h1v1h-1zM696 371h1v1h-1zM736 371h1v1h-1zM756 371h1v1h-1zM776 371h1v1h-1zM796 371h1v1h-1zM836 371h1v1h-1zM856 371h1v1h-1zM876 371h1v1h-1zM896 371h1v1h-1zM936 371h1v1h-1zM956 371h1v1h-1zM976 371h1v1h-1zM996 371h1v1h-1zM36 427h1v1h-1zM56 427h1v1h-1zM76 427h1v1h-1zM96 427h1v1h-1zM136 427h1v1h-1zM156 427h1v1h-1zM176 427h1v1h-1zM196 427h1v1h-1zM236 427h1v1h-1zM256 427h1v1h-1zM276 427h1v1h-1zM296 427h1v1h-1zM336 427h1v1h-1zM356 427h1v1h-1zM376 427h1v1h-1zM396 427h1v1h-1zM436 427h1v1h-1zM456 427h1v1h-1zM476 427h1v1h-1zM496 427h1v1h-1zM536 427h1v1h-1zM556 427h1v1h-1zM576 427h1v1h-1zM596 427h1v1h-1zM636 427h1v1h-1zM656 427h1v1h-1zM676 427h1v1h-1zM696 427h1v1h-1zM736 427h1v1h-1zM756 427h1v1h-1zM776 427h1v1h-1zM796 427h1v1h-1zM836 427h1v1h-1zM856 427h1v1h-1zM876 427h1v1h-1zM896 427h1v1h-1zM936 427h1v1h-1zM956 427h1v1h-1zM976 427h1v1h-1zM996 427h1v1h-1zM36 483h1v1h-1zM56 483h1v1h-1zM76 483h1v1h-1zM96 483h1v1h-1zM136 483h1v1h-1zM156 483h1v1h-1zM176 483h1v1h-1zM196 483h1v1h-1zM236 483h1v1h-1zM256 483h1v1h-1zM276 483h1v1h-1zM296 483h1v1h-1zM336 483h1v1h-1zM356 483h1v1h-1zM376 483h1v1h-1zM396 483h1v1h-1zM436 483h1v1h-1zM456 483h1v1h-1zM476 483h1v1h-1zM496 483h1v1h-1zM536 483h1v1h-1zM556 483h1v1h-1zM576 483h1v1h-1zM596 483h1v1h-1zM636 483h1v1h-1zM656 483h1v1h-1zM676 483h1v1h-1zM696 483h1v1h-1zM736 483h1v1h-1zM756 483h1v1h-1zM776 483h1v1h-1zM796 483h1v1h-1zM836 483h1v1h-1zM856 483h1v1h-1zM876 483h1v1h-1zM896 483h1v1h-1zM936 483h1v1h-1zM956 483h1v1h-1zM976 483h1v1h-1zM996 483h1v1h-1zM36 539h1v1h-1zM56 539h1v1h-1zM76 539h1v1h-1zM96 539h1v1h-1zM136 539h1v1h-1zM156 539h1v1h-1zM176 539h1v1h-1zM196 539h1v1h-1zM236 539h1v1h-1zM256 539h1v1h-1zM276 539h1v1h-1zM296 539h1v1h-1zM336 539h1v1h-1zM356 539h1v1h-1zM376 539h1v1h-1zM396 539h1v1h-1zM436 539h1v1h-1zM456 539h1v1h-1zM476 539h1v1h-1zM496 539h1v1h-1zM536 539h1v1h-1zM556 539h1v1h-1zM576 539h1v1h-1zM596 539h1v1h-1zM636 539h1v1h-1zM656 539h1v1h-1zM676 539h1v1h-1zM696 539h1v1h-1zM736 539h1v1h-1zM756 539h1v1h-1zM776 539h1v1h-1zM796 539h1v1h-1zM836 539h1v1h-1zM856 539h1v1h-1zM876 539h1v1h-1zM896 539h1v1h-1zM936 539h1v1h-1zM956 539h1v1h-1zM976 539h1v1h-1zM996 539h1v1h-1z"/></g>
<path d="M17.5,372.8 L18.5,372.2 L19.5,372.0 L20.5,372.6 L21.5,373.5 L22.5,373.9 L23.5,373.3 L24.5,371.8 L25.5,370.3 L26.5,370.4 L27.5,372.8 L28.5,375.5 L29.5,375.7 L30.5,372.9 L31.5,370.3 L32.5,370.6 L33.5,373.4 L34.5,376.1 L35.5,377.4 L36.5,377.3 L37.5,376.2 L38.5,374.4 L39.5,372.4 L40.5,370.9 L41.5,370.6 L42.5,372.0 L43.5,374.3 L44.5,376.1 L45.5,376.5 L46.5,375.6 L47.5,373.9 L48.5,371.4 L49.5,369.7 L50.5,370.7 L51.5,375.2 L52.5,380.0 L53.5,381.3 L54.5,379.0 L55.5,376.3 L56.5,375.2 L57.5,374.3 L58.5,372.3 L59.5,369.9 L60.5,369.5 L61.5,371.6 L62.5,374.3 L63.5,374.8 L64.5,373.3 L65.5,371.8 L66.5,372.1 L67.5,374.2 L68.5,376.7 L69.5,378.2 L70.5,377.9 L71.5,375.6 L72.5,372.1 L73.5,369.4 L74.5,368.9 L75.5,370.3 L76.5,372.3 L77.5,373.6 L78.5,373.9 L79.5,373.0 L80.5,372.2 L81.5,372.8 L82.5,374.1 L83.5,374.3 L84.5,373.5 L85.5,373.5 L86.5,374.2 L87.5,374.5 L88.5,374.4 L89.5,375.0 L90.5,375.2 L91.5,373.6 L92.5,371.1 L93.5,370.3 L94.5,372.0 L95.5,374.0 L96.5,375.0 L97.5,375.7 L98.5,377.4 L99.5,379.0 L100.5,377.9 L101.5,374.0 L102.5,370.4 L103.5,370.0 L104.5,371.7 L105.5,373.0 L106.5,373.5 L107.5,374.8 L108.5,376.7 L109.5,376.5 L110.5,373.6 L111.5,371.1 L112.5,372.2 L113.5,376.2 L114.5,379.2 L115.5,378.4 L116.5,374.7 L117.5,371.3 L118.5,370.5 L119.5,371.7 L120.5,372.8 L121.5,373.3 L122.5,374.1 L123.5,375.2 L124.5,376.4 L125.5,377.0 L126.5,376.3 L127.5,373.6 L128.5,370.5 L129.5,369.8 L130.5,371.7 L131.5,373.4 L132.5,372.9 L133.5,371.9 L134.5,372.7 L135.5,374.7 L136.5,375.2 L137.5,373.3 L138.5,371.7 L139.5,372.8 L140.5,375.4 L141.5,376.5 L142.5,374.9 L143.5,372.4 L144.5,371.1 L145.5,372.0 L146.5,374.6 L147.5,377.2 L148.5,378.4 L149.5,377.4 L150.5,375.4 L151.5,374.0 L152.5,373.7 L153.5,373.0 L154.5,371.9 L155.5,371.6 L156.5,372.7 L157.5,373.7 L158.5,373.6 L159.5,372.7 L160.5,372.2 L161.5,372.7 L162.5,373.8 L163.5,374.2 L164.5,373.4 L165.5,371.9 L166.5,371.0 L167.5,371.4 L168.5,372.5 L169.5,373.8 L170.5,375.3 L171.5,376.3 L172.5,376.1 L173.5,374.2 L174.5,372.5 L175.5,372.1 L176.5,372.6 L177.5,372.7 L178.5,372.9 L179.5,374.3 L180.5,376.3 L181.5,376.3 L182.5,373.2 L183.5,369.6 L184.5,369.4 L185.5,373.1 L186.5,376.7 L187.5,376.3 L188.5,372.7 L189.5,370.6 L190.5,372.2 L191.5,375.1 L192.5,376.0 L193.5,374.9 L194.5,374.1 L195.5,374.8 L196.5,375.9 L197.5,376.2 L198.5,375.1 L199.5,373.1 L200.5,371.7 L201.5,371.6 L202.5,371.9 L203.5,371.8 L204.5,372.1 L205.5,373.6 L206.5,375.2 L207.5,375.2 L208.5,373.9 L209.5,373.1 L210.5,373.7 L211.5,374.7 L212.5,374.6 L213.5,373.3 L214.5,372.1 L215.5,372.0 L216.5,373.2 L217.5,374.9 L218.5,377.1 L219.5,379.1 L220.5,379.4 L221.5,376.6 L222.5,372.5 L223.5,370.6 L224.5,372.6 L225.5,376.6 L226.5,378.6 L227.5,376.8 L228.5,373.6 L229.5,372.5 L230.5,374.7 L231.5,377.6 L232.5,378.0 L233.5,375.8 L234.5,373.2 L235.5,372.1 L236.5,371.9 L237.5,371.2 L238.5,370.5 L239.5,371.2 L240.5,373.4 L241.5,375.2 L242.5,375.1 L243.5,374.3 L244.5,374.6 L245.5,375.4 L246.5,374.9 L247.5,373.6 L248.5,373.4 L249.5,374.6 L250.5,375.4 L251.5,374.9 L252.5,374.0 L253.5,374.1 L254.5,375.0 L255.5,374.3 L256.5,370.5 L257.5,366.5 L258.5,366.1 L259.5,369.7 L260.5,373.9 L261.5,375.8 L262.5,375.7 L263.5,375.3 L264.5,374.9 L265.5,373.1 L266.5,369.8 L267.5,368.1 L268.5,369.8 L269.5,373.1 L270.5,375.0 L271.5,374.9 L272.5,374.3 L273.5,374.4 L274.5,375.0 L275.5,375.5 L276.5,375.4 L277.5,374.2 L278.5,372.3 L279.5,371.1 L280.5,371.8 L281.5,373.4 L282.5,374.0 L283.5,373.7 L284.5,374.0 L285.5,375.5 L286.5,376.7 L287.5,376.4 L288.5,375.4 L289.5,374.9 L290.5,374.6 L291.5,373.4 L292.5,371.6 L293.5,370.6 L294.5,371.8 L295.5,373.9 L296.5,374.8 L297.5,374.0 L298.5,373.5 L299.5,374.9 L300.5,377.5 L301.5,379.3 L302.5,378.4 L303.5,374.8 L304.5,371.0 L305.5,369.9 L306.5,372.1 L307.5,375.4 L308.5,377.6 L309.5,377.5 L310.5,375.1 L311.5,371.6 L312.5,369.0 L313.5,369.0 L314.5,371.6 L315.5,375.8 L316.5,378.9 L317.5,378.4 L318.5,375.0 L319.5,372.8 L320.5,374.5 L321.5,377.8 L322.5,378.8 L323.5,376.7 L324.5,373.7 L325.5,372.1 L326.5,371.3 L327.5,370.1 L328.5,369.5 L329.5,371.1 L330.5,373.7 L331.5,375.0 L332.5,374.2 L333.5,373.4 L334.5,373.7 L335.5,374.3 L336.5,374.4 L337.5,374.2 L338.5,374.6 L339.5,375.5 L340.5,375.9 L341.5,374.8 L342.5,372.6 L343.5,371.5 L344.5,372.8 L345.5,375.2 L346.5,376.2 L347.5,375.1 L348.5,373.6 L349.5,373.6 L350.5,374.7 L351.5,375.1 L352.5,374.5 L353.5,373.7 L354.5,373.1 L355.5,372.6 L356.5,372.5 L357.5,373.3 L358.5,373.8 L359.5,372.3 L360.5,369.7 L361.5,368.7 L362.5,371.4 L363.5,376.7 L364.5,381.5 L365.5,383.4 L366.5,381.4 L367.5,376.7 L368.5,371.9 L369.5,369.6 L370.5,370.7 L371.5,373.1 L372.5,374.1 L373.5,374.1 L374.5,374.6 L375.5,375.5 L376.5,375.3 L377.5,373.8 L378.5,372.5 L379.5,373.1 L380.5,374.8 L381.5,375.8 L382.5,375.1 L383.5,373.3 L384.5,371.6 L385.5,371.3 L386.5,372.3 L387.5,373.9 L388.5,374.8 L389.5,374.8 L390.5,374.8 L391.5,375.2 L392.5,375.1 L393.5,373.3 L394.5,370.8 L395.5,369.7 L396.5,370.7 L397.5,373.1 L398.5,375.0 L399.5,375.0 L400.5,373.1 L401.5,371.6 L402.5,372.9 L403.5,375.8 L404.5,376.4 L405.5,373.6 L406.5,371.0 L407.5,371.8 L408.5,374.4 L409.5,375.9 L410.5,375.5 L411.5,373.8 L412.5,371.9 L413.5,370.7 L414.5,371.9 L415.5,374.5 L416.5,375.6 L417.5,374.1 L418.5,372.2 L419.5,371.9 L420.5,373.1 L421.5,374.6 L422.5,374.8 L423.5,373.0 L424.5,370.0 L425.5,369.0 L426.5,372.2 L427.5,377.5 L428.5,380.4 L429.5,378.4 L430.5,374.3 L431.5,372.3 L432.5,373.7 L433.5,376.1 L434.5,376.7 L435.5,375.2 L436.5,373.2 L437.5,372.2 L438.5,372.2 L439.5,372.6 L440.5,372.9 L441.5,373.0 L442.5,373.0 L443.5,374.1 L444.5,376.4 L445.5,378.2 L446.5,377.2 L447.5,374.4 L448.5,373.3 L449.5,374.9 L450.5,375.9 L451.5,373.1 L452.5,368.2 L453.5,365.7 L454.5,368.0 L455.5,372.9 L456.5,376.5 L457.5,376.6 L458.5,374.2 L459.5,372.0 L460.5,371.4 L461.5,371.7 L462.5,371.7 L463.5,371.6 L464.5,372.2 L465.5,373.0 L466.5,372.6 L467.5,371.4 L468.5,371.5 L469.5,374.2 L470.5,377.4 L471.5,378.3 L472.5,376.3 L473.5,373.5 L474.5,371.2 L475.5,369.4 L476.5,368.7 L477.5,369.6 L478.5,371.6 L479.5,373.8 L480.5,375.6 L481.5,376.0 L482.5,374.5 L483.5,372.7 L484.5,372.8 L485.5,374.5 L486.5,375.3 L487.5,373.7 L488.5,371.4 L489.5,370.6 L490.5,371.7 L491.5,372.6 L492.5,371.9 L493.5,370.8 L494.5,371.4 L495.5,373.6 L496.5,375.7 L497.5,376.8 L498.5,376.9 L499.5,376.5 L500.5,375.4 L501.5,373.6 L502.5,371.9 L503.5,371.2 L504.5,371.3 L505.5,371.0 L506.5,370.3 L507.5,369.9 L508.5,370.6 L509.5,372.7 L510.5,375.0 L511.5,376.0 L512.5,373.0 L513.5,369.0 L514.5,355.0 L515.5,330.0 L516.5,300.0 L517.5,275.0 L518.5,255.0 L520.5,247.0 L522.5,248.0 L524.5,241.0 L526.5,240.4 L527.5,240.7 L528.5,242.3 L529.5,243.8 L530.5,244.1 L531.5,242.7 L532.5,240.7 L533.5,239.1 L534.5,238.4 L535.5,238.2 L536.5,238.1 L537.5,238.3 L538.5,239.3 L539.5,240.4 L540.5,239.9 L541.5,237.6 L542.5,236.1 L543.5,237.4 L544.5,240.0 L545.5,241.3 L546.5,240.8 L547.5,240.1 L548.5,240.6 L549.5,241.7 L550.5,241.7 L551.5,239.7 L552.5,236.2 L553.5,233.9 L554.5,234.3 L555.5,236.9 L556.5,240.2 L557.5,242.7 L558.5,243.6 L559.5,243.1 L560.5,241.8 L561.5,239.7 L562.5,236.5 L563.5,233.2 L564.5,231.8 L565.5,233.6 L566.5,237.3 L567.5,240.2 L568.5,241.2 L569.5,240.7 L570.5,238.9 L571.5,236.6 L572.5,235.2 L573.5,235.9 L574.5,238.1 L575.5,239.8 L576.5,239.9 L577.5,238.5 L578.5,237.1 L579.5,237.3 L580.5,239.6 L581.5,241.1 L582.5,239.2 L583.5,235.1 L584.5,233.3 L585.5,235.3 L586.5,238.3 L587.5,240.0 L588.5,241.3 L589.5,242.9 L590.5,243.0 L591.5,240.3 L592.5,235.8 L593.5,231.7 L594.5,229.9 L595.5,231.4 L596.5,235.8 L597.5,241.0 L598.5,243.8 L599.5,242.7 L600.5,239.3 L601.5,236.7 L602.5,237.0 L603.5,238.9 L604.5,239.4 L605.5,236.9 L606.5,232.7 L607.5,230.3 L608.5,232.0 L609.5,236.6 L610.5,240.4 L611.5,240.8 L612.5,239.2 L613.5,238.4 L614.5,238.8 L615.5,238.6 L616.5,236.7 L617.5,234.3 L618.5,233.2 L619.5,234.1 L620.5,235.7 L621.5,236.4 L622.5,235.5 L623.5,234.6 L624.5,235.7 L625.5,238.1 L626.5,239.6 L627.5,239.0 L628.5,238.0 L629.5,237.4 L630.5,236.4 L631.5,234.4 L632.5,232.9 L633.5,233.7 L634.5,236.3 L635.5,238.7 L636.5,239.0 L637.5,237.6 L638.5,235.7 L639.5,234.8 L640.5,235.7 L641.5,237.7 L642.5,239.3 L643.5,239.6 L644.5,238.7 L645.5,237.4 L646.5,236.6 L647.5,236.4 L648.5,236.1 L649.5,234.5 L650.5,231.8 L651.5,230.6 L652.5,232.7 L653.5,236.4 L654.5,238.4 L655.5,237.3 L656.5,234.6 L657.5,232.7 L658.5,232.8 L659.5,234.6 L660.5,236.7 L661.5,238.1 L662.5,238.0 L663.5,236.5 L664.5,234.4 L665.5,233.5 L666.5,234.5 L667.5,235.8 L668.5,235.5 L669.5,233.9 L670.5,233.1 L671.5,234.1 L672.5,236.1 L673.5,237.8 L674.5,238.4 L675.5,238.2 L676.5,237.6 L677.5,236.0 L678.5,232.7 L679.5,228.8 L680.5,227.4 L681.5,230.3 L682.5,235.6 L683.5,239.7 L684.5,240.2 L685.5,237.7 L686.5,234.7 L687.5,233.1 L688.5,232.5 L689.5,231.5 L690.5,230.2 L691.5,231.1 L692.5,234.8 L693.5,238.7 L694.5,239.6 L695.5,237.1 L696.5,233.4 L697.5,231.3 L698.5,231.4 L699.5,232.4 L700.5,233.6 L701.5,235.9 L702.5,239.1 L703.5,240.1 L704.5,236.6 L705.5,231.4 L706.5,229.3 L707.5,231.8 L708.5,236.4 L709.5,239.6 L710.5,239.3 L711.5,235.0 L712.5,229.5 L713.5,227.2 L714.5,229.7 L715.5,234.1 L716.5,236.7 L717.5,236.8 L718.5,235.9 L719.5,234.7 L720.5,233.3 L721.5,233.1 L722.5,234.4 L723.5,235.7 L724.5,235.5 L725.5,234.6 L726.5,234.2 L727.5,233.9 L728.5,233.3 L729.5,233.2 L730.5,234.2 L731.5,235.0 L732.5,234.6 L733.5,233.6 L734.5,233.6 L735.5,234.6 L736.5,234.9 L737.5,233.2 L738.5,230.7 L739.5,229.9 L740.5,231.3 L741.5,233.5 L742.5,235.3 L743.5,237.1 L744.5,238.5 L745.5,238.5 L746.5,236.9 L747.5,234.4 L748.5,232.9 L749.5,233.1 L750.5,233.8 L751.5,233.7 L752.5,233.1 L753.5,232.9 L754.5,233.5 L755.5,234.4 L756.5,235.4 L757.5,236.3 L758.5,236.7 L759.5,236.7 L760.5,236.6 L761.5,236.3 L762.5,235.8 L763.5,234.5 L764.5,231.9 L765.5,228.5 L766.5,226.6 L767.5,227.8 L768.5,231.5 L769.5,234.6 L770.5,235.2 L771.5,234.1 L772.5,233.6 L773.5,234.4 L774.5,235.6 L775.5,236.6 L776.5,237.5 L777.5,237.3 L778.5,234.7 L779.5,230.7 L780.5,228.7 L781.5,230.9 L782.5,235.2 L783.5,238.0 L784.5,237.1 L785.5,233.5 L786.5,230.6 L787.5,230.6 L788.5,232.9 L789.5,234.7 L790.5,234.4 L791.5,233.3 L792.5,233.2 L793.5,234.6 L794.5,236.4 L795.5,237.2 L796.5,236.1 L797.5,233.0 L798.5,229.9 L799.5,229.9 L800.5,233.3 L801.5,236.8 L802.5,237.5 L803.5,236.3 L804.5,234.8 L805.5,233.4 L806.5,232.0 L807.5,231.0 L808.5,230.8 L809.5,231.4 L810.5,233.3 L811.5,235.7 L812.5,236.8 L813.5,236.1 L814.5,235.3 L815.5,235.5 L816.5,235.7 L817.5,234.8 L818.5,233.6 L819.5,233.3 L820.5,233.7 L821.5,234.7 L822.5,235.2 L823.5,233.7 L824.5,230.6 L825.5,228.7 L826.5,229.9 L827.5,232.5 L828.5,233.9 L829.5,234.2 L830.5,235.5 L831.5,237.9 L832.5,238.7 L833.5,236.3 L834.5,232.9 L835.5,231.6 L836.5,232.9 L837.5,234.5 L838.5,235.0 L839.5,234.4 L840.5,233.3 L841.5,231.8 L842.5,230.4 L843.5,230.1 L844.5,231.1 L845.5,232.1 L846.5,232.6 L847.5,233.1 L848.5,234.2 L849.5,235.4 L850.5,235.9 L851.5,235.5 L852.5,234.1 L853.5,232.1 L854.5,230.2 L855.5,229.7 L856.5,231.5 L857.5,234.7 L858.5,236.8 L859.5,235.5 L860.5,232.0 L861.5,230.0 L862.5,231.6 L863.5,234.6 L864.5,235.9 L865.5,235.4 L866.5,234.6 L867.5,233.8 L868.5,232.0 L869.5,229.8 L870.5,229.6 L871.5,232.3 L872.5,235.7 L873.5,237.1 L874.5,235.9 L875.5,234.0 L876.5,232.6 L877.5,231.6 L878.5,230.9 L879.5,231.8 L880.5,234.1 L881.5,236.2 L882.5,236.6 L883.5,235.6 L884.5,234.2 L885.5,232.6 L886.5,230.9 L887.5,229.9 L888.5,230.7 L889.5,232.5 L890.5,234.0 L891.5,234.4 L892.5,234.4 L893.5,234.7 L894.5,234.9 L895.5,233.8 L896.5,230.9 L897.5,228.9 L898.5,230.3 L899.5,234.6 L900.5,238.1 L901.5,238.0 L902.5,234.9 L903.5,231.0 L904.5,228.9 L905.5,229.9 L906.5,233.8 L907.5,238.1 L908.5,239.8 L909.5,237.8 L910.5,234.1 L911.5,231.4 L912.5,231.1 L913.5,232.3 L914.5,234.0 L915.5,235.9 L916.5,237.3 L917.5,236.1 L918.5,231.8 L919.5,227.6 L920.5,227.3 L921.5,230.8 L922.5,234.2 L923.5,234.3 L924.5,232.0 L925.5,230.6 L926.5,231.3 L927.5,233.0 L928.5,234.3 L929.5,235.2 L930.5,235.4 L931.5,235.6 L932.5,236.1 L933.5,236.5 L934.5,235.3 L935.5,232.8 L936.5,231.3 L937.5,233.1 L938.5,237.2 L939.5,239.8 L940.5,238.4 L941.5,234.6 L942.5,231.7 L943.5,231.2 L944.5,231.5 L945.5,231.1 L946.5,231.1 L947.5,232.4 L948.5,234.0 L949.5,234.8 L950.5,235.9 L951.5,237.4 L952.5,237.7 L953.5,235.4 L954.5,231.9 L955.5,229.9 L956.5,230.5 L957.5,232.4 L958.5,234.3 L959.5,236.0 L960.5,237.0 L961.5,235.8 L962.5,233.2 L963.5,231.3 L964.5,231.2 L965.5,232.2 L966.5,233.6 L967.5,235.1 L968.5,235.8 L969.5,234.2 L970.5,231.5 L971.5,231.2 L972.5,234.4 L973.5,238.1 L974.5,238.4 L975.5,235.6 L976.5,232.9 L977.5,232.0 L978.5,231.4 L979.5,229.3 L980.5,226.5 L981.5,225.7 L982.5,228.6 L983.5,233.9 L984.5,238.2 L985.5,239.5 L986.5,238.1 L987.5,236.2 L988.5,235.3 L989.5,235.7 L990.5,236.3 L991.5,235.9 L992.5,234.3 L993.5,232.8 L994.5,232.5 L995.5,233.5 L996.5,234.8 L997.5,235.5 L998.5,234.8 L999.5,233.1 L1000.5,232.1 L1001.5,232.9 L1002.5,234.5 L1003.5,234.8 L1004.5,233.4 L1005.5,232.7 L1006.5,234.8 L1007.5,238.1 L1008.5,238.7 L1009.5,235.5 L1010.5,231.1 L1011.5,229.3 L1012.5,231.4 L1013.5,235.4 L1014.5,237.8 L1015.5,236.9 L1016.5,234.4" fill="none" stroke="#10e0e8" stroke-width="1.4" stroke-linejoin="round"/>
<path d="M17.5,352.0 L17.5,290.0 L18.5,255.0 L19.5,215.0 L20.5,199.0 L21.5,196.0 L23.5,190.0 L24.5,188.0 L27.5,180.0 L29.5,178.1 L30.5,178.7 L31.5,181.3 L32.5,181.1 L33.5,177.0 L34.5,174.0 L35.5,173.7 L36.5,174.8 L37.5,174.4 L38.5,171.0 L39.5,167.4 L40.5,167.7 L41.5,171.4 L42.5,174.4 L43.5,174.4 L44.5,172.7 L45.5,171.7 L46.5,171.7 L47.5,172.2 L48.5,172.3 L49.5,171.6 L50.5,170.2 L51.5,168.9 L52.5,168.3 L53.5,168.9 L54.5,169.9 L55.5,169.6 L56.5,168.5 L57.5,168.7 L58.5,170.2 L59.5,170.6 L60.5,168.8 L61.5,166.5 L62.5,166.7 L63.5,169.8 L64.5,172.2 L65.5,170.7 L66.5,167.7 L67.5,166.9 L68.5,168.3 L69.5,170.0 L70.5,170.1 L71.5,168.7 L72.5,167.3 L73.5,166.5 L74.5,164.6 L75.5,166.0 L76.5,165.0 L77.5,175.0 L77.5,197.0 L78.5,210.0 L80.5,316.0 L81.5,404.0 L82.5,408.6 L83.5,431.0 L84.5,443.0 L86.5,452.0 L87.5,458.0 L90.5,460.0 L92.5,452.0 L93.5,445.0 L95.5,448.0 L98.5,453.6 L104.5,461.5 L105.5,462.0 L106.5,464.5 L107.5,467.7 L108.5,468.6 L109.5,464.7 L110.5,459.4 L111.5,456.7 L112.5,458.3 L113.5,461.8 L114.5,464.4 L115.5,466.3 L116.5,467.9 L117.5,467.6 L118.5,465.0 L119.5,462.3 L120.5,461.0 L121.5,460.6 L122.5,460.8 L123.5,461.0 L124.5,460.3 L125.5,460.9 L126.5,465.4 L127.5,471.2 L128.5,472.2 L129.5,466.9 L130.5,460.9 L131.5,460.7 L132.5,465.5 L133.5,469.8 L134.5,470.3 L135.5,467.9 L136.5,464.6 L137.5,462.6 L138.5,463.8 L139.5,466.0 L139.5,442.0 L140.5,404.0 L144.5,224.0 L145.5,206.0 L146.5,197.0 L148.5,188.0 L149.5,183.5 L152.5,182.0 L153.5,178.3 L154.5,177.1 L155.5,174.8 L156.5,174.0 L157.5,177.3 L158.5,180.5 L159.5,179.8 L160.5,176.5 L161.5,174.1 L162.5,173.9 L163.5,174.9 L164.5,175.4 L165.5,174.1 L166.5,171.9 L167.5,170.5 L168.5,169.7 L169.5,169.2 L170.5,169.8 L171.5,171.7 L172.5,173.8 L173.5,174.6 L174.5,173.8 L175.5,171.8 L176.5,168.8 L177.5,166.2 L178.5,166.0 L179.5,167.9 L180.5,169.4 L181.5,169.1 L182.5,168.7 L183.5,170.9 L184.5,174.6 L185.5,174.8 L186.5,170.4 L187.5,167.6 L188.5,170.1 L189.5,174.2 L190.5,173.8 L191.5,168.9 L192.5,164.3 L193.5,162.4 L194.5,162.2 L195.5,163.4 L196.5,166.3 L197.5,170.5 L198.5,173.2 L199.5,171.1 L200.5,166.0 L201.5,165.0 L202.5,175.0 L202.5,197.0 L203.5,210.0 L205.5,316.0 L206.5,404.0 L207.5,408.6 L208.5,431.0 L209.5,443.0 L211.5,452.0 L212.5,458.0 L215.5,460.0 L217.5,452.0 L218.5,445.0 L220.5,448.0 L223.5,453.6 L229.5,461.5 L230.5,461.8 L231.5,462.9 L232.5,464.2 L233.5,465.6 L234.5,466.0 L235.5,464.7 L236.5,462.2 L237.5,460.4 L238.5,460.1 L239.5,461.2 L240.5,462.6 L241.5,463.4 L242.5,463.1 L243.5,461.6 L244.5,459.8 L245.5,460.4 L246.5,464.4 L247.5,468.5 L248.5,468.6 L249.5,466.1 L250.5,464.6 L251.5,464.5 L252.5,463.2 L253.5,461.3 L254.5,462.0 L255.5,465.0 L256.5,466.4 L257.5,465.7 L258.5,465.6 L259.5,466.3 L260.5,465.5 L261.5,463.8 L262.5,463.9 L263.5,465.2 L264.5,466.0 L264.5,442.0 L265.5,404.0 L269.5,224.0 L270.5,206.0 L271.5,197.0 L273.5,188.0 L274.5,183.5 L277.5,182.0 L278.5,178.5 L279.5,175.7 L280.5,174.3 L281.5,174.6 L282.5,174.2 L283.5,172.6 L284.5,171.1 L285.5,171.2 L286.5,172.9 L287.5,174.1 L288.5,173.9 L289.5,173.2 L290.5,171.2 L291.5,167.2 L292.5,164.0 L293.5,165.8 L294.5,172.1 L295.5,178.1 L296.5,179.1 L297.5,174.7 L298.5,168.7 L299.5,166.4 L300.5,169.0 L301.5,172.1 L302.5,171.5 L303.5,169.1 L304.5,169.7 L305.5,173.5 L306.5,175.2 L307.5,172.0 L308.5,166.9 L309.5,164.0 L310.5,164.4 L311.5,167.3 L312.5,171.2 L313.5,173.8 L314.5,173.8 L315.5,171.4 L316.5,168.3 L317.5,166.7 L318.5,167.9 L319.5,170.6 L320.5,171.4 L321.5,168.6 L322.5,165.1 L323.5,163.4 L324.5,162.6 L325.5,166.0 L326.5,165.0 L327.5,175.0 L327.5,197.0 L328.5,210.0 L330.5,316.0 L331.5,404.0 L332.5,408.6 L333.5,431.0 L334.5,443.0 L336.5,452.0 L337.5,458.0 L340.5,460.0 L342.5,452.0 L343.5,445.0 L345.5,448.0 L348.5,453.6 L354.5,461.5 L355.5,461.2 L356.5,463.5 L357.5,466.6 L358.5,466.0 L359.5,462.7 L360.5,461.9 L361.5,464.4 L362.5,466.7 L363.5,466.1 L364.5,464.0 L365.5,463.0 L366.5,462.8 L367.5,462.1 L368.5,461.7 L369.5,463.7 L370.5,467.2 L371.5,467.5 L372.5,462.9 L373.5,458.7 L374.5,459.5 L375.5,463.3 L376.5,465.9 L377.5,465.9 L378.5,464.4 L379.5,463.9 L380.5,466.6 L381.5,470.7 L382.5,471.8 L383.5,468.8 L384.5,465.0 L385.5,463.8 L386.5,465.6 L387.5,467.4 L388.5,466.8 L389.5,466.0 L389.5,442.0 L390.5,404.0 L394.5,224.0 L395.5,206.0 L396.5,197.0 L398.5,188.0 L399.5,183.5 L402.5,182.0 L403.5,179.0 L404.5,178.8 L405.5,178.7 L406.5,177.9 L407.5,176.5 L408.5,174.9 L409.5,172.7 L410.5,170.6 L411.5,169.8 L412.5,171.2 L413.5,174.4 L414.5,177.2 L415.5,177.2 L416.5,173.1 L417.5,167.2 L418.5,164.6 L419.5,167.1 L420.5,171.1 L421.5,173.0 L422.5,171.9 L423.5,168.4 L424.5,164.9 L425.5,165.8 L426.5,171.4 L427.5,175.1 L428.5,172.7 L429.5,169.1 L430.5,169.6 L431.5,172.1 L432.5,171.3 L433.5,167.4 L434.5,164.8 L435.5,167.0 L436.5,172.5 L437.5,176.4 L438.5,174.7 L439.5,169.0 L440.5,164.9 L441.5,165.0 L442.5,167.3 L443.5,169.5 L444.5,171.4 L445.5,172.9 L446.5,172.5 L447.5,169.1 L448.5,164.6 L449.5,162.0 L450.5,166.0 L451.5,165.0 L452.5,175.0 L452.5,197.0 L453.5,210.0 L455.5,316.0 L456.5,404.0 L457.5,408.6 L458.5,431.0 L459.5,443.0 L461.5,452.0 L462.5,458.0 L465.5,460.0 L467.5,452.0 L468.5,445.0 L470.5,448.0 L473.5,453.6 L479.5,461.5 L480.5,460.3 L481.5,457.6 L482.5,455.0 L483.5,454.4 L484.5,457.4 L485.5,461.4 L486.5,463.3 L487.5,462.4 L488.5,461.7 L489.5,463.3 L490.5,465.6 L491.5,466.4 L492.5,466.2 L493.5,466.8 L494.5,466.9 L495.5,464.3 L496.5,461.2 L497.5,461.7 L498.5,464.4 L499.5,465.9 L500.5,466.5 L501.5,468.1 L502.5,468.3 L503.5,464.5 L504.5,459.8 L505.5,460.3 L506.5,465.1 L507.5,467.8 L508.5,466.1 L509.5,463.5 L510.5,463.2 L511.5,465.7 L512.5,470.1 L513.5,472.6 L514.5,466.0 L514.5,442.0 L515.5,404.0 L519.5,224.0 L520.5,206.0 L521.5,197.0 L523.5,188.0 L524.5,183.5 L527.5,182.0 L528.5,178.7 L529.5,178.8 L530.5,178.5 L531.5,176.0 L532.5,173.0 L533.5,172.6 L534.5,175.5 L535.5,178.3 L536.5,176.9 L537.5,171.9 L538.5,168.9 L539.5,171.1 L540.5,175.2 L541.5,175.3 L542.5,171.4 L543.5,168.2 L544.5,167.5 L545.5,167.4 L546.5,168.1 L547.5,169.4 L548.5,169.5 L549.5,168.8 L550.5,169.7 L551.5,171.8 L552.5,173.1 L553.5,173.8 L554.5,173.9 L555.5,172.1 L556.5,169.4 L557.5,167.9 L558.5,167.8 L559.5,167.6 L560.5,167.3 L561.5,167.9 L562.5,169.6 L563.5,171.6 L564.5,172.4 L565.5,171.7 L566.5,169.8 L567.5,167.1 L568.5,165.0 L569.5,165.2 L570.5,167.6 L571.5,171.3 L572.5,175.3 L573.5,176.5 L574.5,173.5 L575.5,166.0 L576.5,165.0 L577.5,175.0 L577.5,197.0 L578.5,210.0 L580.5,316.0 L581.5,404.0 L582.5,408.6 L583.5,431.0 L584.5,443.0 L586.5,452.0 L587.5,458.0 L590.5,460.0 L592.5,452.0 L593.5,445.0 L595.5,448.0 L598.5,453.6 L604.5,461.5 L605.5,461.1 L606.5,460.5 L607.5,459.0 L608.5,457.4 L609.5,459.2 L610.5,463.4 L611.5,465.7 L612.5,464.2 L613.5,462.3 L614.5,463.5 L615.5,466.3 L616.5,467.8 L617.5,466.7 L618.5,463.4 L619.5,460.2 L620.5,460.6 L621.5,464.0 L622.5,466.1 L623.5,466.0 L624.5,465.7 L625.5,464.8 L626.5,462.4 L627.5,461.5 L628.5,465.1 L629.5,469.8 L630.5,471.0 L631.5,468.8 L632.5,466.3 L633.5,465.3 L634.5,464.9 L635.5,463.5 L636.5,461.6 L637.5,461.5 L638.5,463.7 L639.5,466.0 L639.5,442.0 L640.5,404.0 L644.5,224.0 L645.5,206.0 L646.5,197.0 L648.5,188.0 L649.5,183.5 L652.5,182.0 L653.5,178.9 L654.5,176.5 L655.5,174.8 L656.5,175.7 L657.5,177.4 L658.5,177.1 L659.5,174.3 L660.5,170.1 L661.5,168.1 L662.5,170.7 L663.5,175.3 L664.5,177.0 L665.5,174.5 L666.5,171.6 L667.5,170.3 L668.5,168.9 L669.5,167.1 L670.5,167.9 L671.5,171.3 L672.5,173.7 L673.5,173.7 L674.5,172.7 L675.5,171.7 L676.5,170.1 L677.5,167.4 L678.5,165.5 L679.5,167.0 L680.5,171.5 L681.5,174.8 L682.5,173.5 L683.5,169.6 L684.5,166.9 L685.5,166.8 L686.5,168.3 L687.5,169.9 L688.5,170.3 L689.5,169.6 L690.5,169.1 L691.5,169.2 L692.5,168.8 L693.5,168.1 L694.5,168.4 L695.5,168.8 L696.5,167.4 L697.5,165.5 L698.5,165.8 L699.5,167.2 L700.5,166.0 L701.5,165.0 L702.5,175.0 L702.5,197.0 L703.5,210.0 L705.5,316.0 L706.5,404.0 L707.5,408.6 L708.5,431.0 L709.5,443.0 L711.5,452.0 L712.5,458.0 L715.5,460.0 L717.5,452.0 L718.5,445.0 L720.5,448.0 L723.5,453.6 L729.5,461.5 L730.5,462.0 L731.5,465.1 L732.5,465.4 L733.5,459.5 L734.5,456.7 L735.5,460.7 L736.5,463.8 L737.5,461.3 L738.5,457.5 L739.5,458.2 L740.5,462.4 L741.5,465.2 L742.5,465.0 L743.5,464.6 L744.5,465.3 L745.5,464.9 L746.5,462.2 L747.5,459.8 L748.5,460.4 L749.5,463.8 L750.5,467.8 L751.5,469.5 L752.5,467.2 L753.5,462.9 L754.5,460.4 L755.5,461.2 L756.5,463.2 L757.5,464.7 L758.5,466.1 L759.5,467.8 L760.5,468.7 L761.5,467.5 L762.5,464.5 L763.5,462.4 L764.5,466.0 L764.5,442.0 L765.5,404.0 L769.5,224.0 L770.5,206.0 L771.5,197.0 L773.5,188.0 L774.5,183.5 L777.5,182.0 L778.5,180.6 L779.5,180.7 L780.5,179.7 L781.5,176.7 L782.5,172.9 L783.5,171.0 L784.5,171.4 L785.5,173.9 L786.5,177.0 L787.5,177.7 L788.5,174.6 L789.5,171.0 L790.5,170.6 L791.5,171.8 L792.5,171.6 L793.5,170.6 L794.5,171.1 L795.5,172.4 L796.5,171.5 L797.5,168.8 L798.5,168.2 L799.5,170.6 L800.5,172.2 L801.5,171.4 L802.5,170.9 L803.5,172.7 L804.5,174.4 L805.5,172.9 L806.5,169.4 L807.5,167.9 L808.5,169.7 L809.5,171.4 L810.5,169.0 L811.5,164.2 L812.5,162.3 L813.5,165.9 L814.5,171.5 L815.5,174.7 L816.5,174.1 L817.5,171.2 L818.5,168.5 L819.5,168.1 L820.5,169.6 L821.5,170.8 L822.5,171.1 L823.5,170.6 L824.5,169.3 L825.5,166.0 L826.5,165.0 L827.5,175.0 L827.5,197.0 L828.5,210.0 L830.5,316.0 L831.5,404.0 L832.5,408.6 L833.5,431.0 L834.5,443.0 L836.5,452.0 L837.5,458.0 L840.5,460.0 L842.5,452.0 L843.5,445.0 L845.5,448.0 L848.5,453.6 L854.5,461.5 L855.5,461.6 L856.5,461.0 L857.5,461.9 L858.5,464.5 L859.5,464.2 L860.5,461.0 L861.5,459.2 L862.5,461.2 L863.5,464.6 L864.5,465.8 L865.5,463.9 L866.5,461.4 L867.5,461.5 L868.5,463.4 L869.5,464.5 L870.5,463.2 L871.5,459.9 L872.5,457.7 L873.5,459.7 L874.5,463.6 L875.5,465.2 L876.5,464.7 L877.5,464.8 L878.5,465.3 L879.5,463.7 L880.5,461.0 L881.5,461.2 L882.5,464.5 L883.5,466.9 L884.5,466.8 L885.5,465.3 L886.5,463.8 L887.5,464.0 L888.5,466.9 L889.5,466.0 L889.5,442.0 L890.5,404.0 L894.5,224.0 L895.5,206.0 L896.5,197.0 L898.5,188.0 L899.5,183.5 L902.5,182.0 L903.5,176.6 L904.5,173.6 L905.5,174.4 L906.5,179.5 L907.5,182.3 L908.5,180.7 L909.5,177.0 L910.5,173.5 L911.5,170.9 L912.5,170.1 L913.5,171.8 L914.5,174.7 L915.5,176.0 L916.5,174.7 L917.5,172.2 L918.5,170.2 L919.5,169.1 L920.5,169.5 L921.5,170.3 L922.5,170.2 L923.5,169.9 L924.5,170.9 L925.5,172.2 L926.5,171.9 L927.5,170.1 L928.5,169.0 L929.5,169.4 L930.5,170.8 L931.5,172.9 L932.5,174.3 L933.5,172.6 L934.5,169.1 L935.5,169.0 L936.5,173.2 L937.5,175.0 L938.5,170.4 L939.5,164.2 L940.5,163.0 L941.5,166.6 L942.5,169.8 L943.5,168.9 L944.5,166.7 L945.5,167.0 L946.5,168.6 L947.5,168.5 L948.5,167.3 L949.5,167.0 L950.5,166.0 L951.5,165.0 L952.5,175.0 L952.5,197.0 L953.5,210.0 L955.5,316.0 L956.5,404.0 L957.5,408.6 L958.5,431.0 L959.5,443.0 L961.5,452.0 L962.5,458.0 L965.5,460.0 L967.5,452.0 L968.5,445.0 L970.5,448.0 L973.5,453.6 L979.5,461.5 L980.5,460.3 L981.5,460.3 L982.5,460.7 L983.5,459.3 L984.5,457.5 L985.5,458.5 L986.5,462.4 L987.5,465.6 L988.5,465.3 L989.5,462.4 L990.5,460.5 L991.5,461.0 L992.5,462.0 L993.5,462.3 L994.5,463.2 L995.5,465.5 L996.5,466.7 L997.5,465.8 L998.5,464.5 L999.5,463.9 L1000.5,463.3 L1001.5,462.9 L1002.5,463.4 L1003.5,464.6 L1004.5,465.4 L1005.5,465.0 L1006.5,464.0 L1007.5,463.0 L1008.5,462.4 L1009.5,462.3 L1010.5,463.0 L1011.5,464.8 L1012.5,467.8 L1013.5,470.8 L1014.5,466.0 L1014.5,442.0 L1015.5,405.0" fill="none" stroke="#f4f400" stroke-width="1.25" stroke-linejoin="round"/>
<rect x="516" y="35" width="1" height="561" fill="#ffff00" shape-rendering="crispEdges"/>
<path d="M826 36h1v3h-1zM826 41h1v3h-1zM826 46h1v3h-1zM826 51h1v3h-1zM826 56h1v3h-1zM826 61h1v3h-1zM826 66h1v3h-1zM826 71h1v3h-1zM826 76h1v3h-1zM826 81h1v3h-1zM826 86h1v3h-1zM826 91h1v3h-1zM826 96h1v3h-1zM826 101h1v3h-1zM826 106h1v3h-1zM826 111h1v3h-1zM826 116h1v3h-1zM826 121h1v3h-1zM826 126h1v3h-1zM826 131h1v3h-1zM826 136h1v3h-1zM826 141h1v3h-1zM826 146h1v3h-1zM826 151h1v3h-1zM826 156h1v3h-1zM826 161h1v3h-1zM826 166h1v3h-1zM826 171h1v3h-1zM826 176h1v3h-1zM826 181h1v3h-1zM826 186h1v3h-1zM826 191h1v3h-1zM826 196h1v3h-1zM826 201h1v3h-1zM826 206h1v3h-1zM826 211h1v3h-1zM826 216h1v3h-1zM826 221h1v3h-1zM826 226h1v3h-1zM826 231h1v3h-1zM826 236h1v3h-1zM826 241h1v3h-1zM826 246h1v3h-1zM826 251h1v3h-1zM826 256h1v3h-1zM826 261h1v3h-1zM826 266h1v3h-1zM826 271h1v3h-1zM826 276h1v3h-1zM826 281h1v3h-1zM826 286h1v3h-1zM826 291h1v3h-1zM826 296h1v3h-1zM826 301h1v3h-1zM826 306h1v3h-1zM826 311h1v3h-1zM826 316h1v3h-1zM826 321h1v3h-1zM826 326h1v3h-1zM826 331h1v3h-1zM826 336h1v3h-1zM826 341h1v3h-1zM826 346h1v3h-1zM826 351h1v3h-1zM826 356h1v3h-1zM826 361h1v3h-1zM826 366h1v3h-1zM826 371h1v3h-1zM826 376h1v3h-1zM826 381h1v3h-1zM826 386h1v3h-1zM826 391h1v3h-1zM826 396h1v3h-1zM826 401h1v3h-1zM826 406h1v3h-1zM826 411h1v3h-1zM826 416h1v3h-1zM826 421h1v3h-1zM826 426h1v3h-1zM826 431h1v3h-1zM826 436h1v3h-1zM826 441h1v3h-1zM826 446h1v3h-1zM826 451h1v3h-1zM826 456h1v3h-1zM826 461h1v3h-1zM826 466h1v3h-1zM826 471h1v3h-1zM826 476h1v3h-1zM826 481h1v3h-1zM826 486h1v3h-1zM826 491h1v3h-1zM826 496h1v3h-1zM826 501h1v3h-1zM826 506h1v3h-1zM826 511h1v3h-1zM826 516h1v3h-1zM826 521h1v3h-1zM826 526h1v3h-1zM826 531h1v3h-1zM826 536h1v3h-1zM826 541h1v3h-1zM826 546h1v3h-1zM826 551h1v3h-1zM826 556h1v3h-1zM826 561h1v3h-1zM826 566h1v3h-1zM826 571h1v3h-1zM826 576h1v3h-1zM826 581h1v3h-1zM826 586h1v3h-1zM826 591h1v3h-1z" fill="#ffff00" shape-rendering="crispEdges"/>
<!-- trigger marker -->
<path d="M510.5,36 L521.5,36 L516,45.5 Z" fill="#ffa000"/>
<rect x="516" y="36" width="1" height="10" fill="#ffff00"/>
<!-- right cyan marker -->
<path d="M996,315.5 L1004.5,310.5 L1004.5,320.8 Z" fill="#00f0f0"/>
<rect x="1004" y="315" width="15" height="1.4" fill="#00f0f0"/>
<!-- ch1 marker -->
<defs><linearGradient id="ag" x1="0" x2="1"><stop offset="0" stop-color="#f0f800"/><stop offset="1" stop-color="#a0f860"/></linearGradient></defs><path d="M19,310.5 L30.5,315.7 L19,321 Z" fill="url(#ag)"/>
<path d="M19,315.2 H22" stroke="#f0f800" stroke-width="1.5"/><circle cx="10.3" cy="315.7" r="8.8" fill="#ffff00" stroke="#ffa000" stroke-width="2.2"/>
<text x="10.6" y="319.8" font-family="Liberation Sans" font-size="11.5" text-anchor="middle" fill="#383800">1</text>
<!-- 50% markers -->
<path d="M38.2,308.6 H70.5 L80.2,318.5 L70.5,328.6 H38.2 Z" fill="none" stroke="#e89000" stroke-width="1.5"/>
<text x="39.8" y="322" font-family="Liberation Sans" font-size="10.2" textLength="27.5" lengthAdjust="spacingAndGlyphs" fill="#f4a400" stroke="#f4a400" stroke-width="0.35">50.0%</text>
<path d="M247.6,308.6 H215.3 L205.6,318.5 L215.3,328.6 H247.6 Z" fill="none" stroke="#e89000" stroke-width="1.5"/>
<text x="217" y="322" font-family="Liberation Sans" font-size="10.2" textLength="27.5" lengthAdjust="spacingAndGlyphs" fill="#f4a400" stroke="#f4a400" stroke-width="0.35">50.0%</text>
</svg>
<div id="panel"></div>
<div class="box" style="left:21px;top:604px;width:281px;height:47px"></div><div class="box" style="left:306px;top:604px;width:136px;height:93px"></div><div class="box" style="left:591px;top:604px;width:186px;height:24px"></div><div class="box" style="left:781px;top:604px;width:231px;height:93px"></div><div class="box" style="left:21px;top:706px;width:566px;height:46px"></div><div class="badge by" style="left:30px;top:612px;width:32px;height:13px;line-height:13px;font-size:10px">C1</div><div class="badge bc" style="left:30px;top:633px;width:32px;height:13px;line-height:13px;font-size:10px">C2</div><div class="t" style="left:66.5px;top:611.5px;">200mV/div</div><div class="t" style="left:66.5px;top:632.5px;">200mV/div</div><div class="t" style="left:182px;top:611.5px;">50&Omega;</div><div class="t" style="left:214px;top:610.5px;font-size:8.5px;line-height:8px">B</div><svg style="position:absolute;left:222px;top:608.0px" width="6" height="6"><path d="M4.2,0.6 L2.4,4.2" stroke="#f0f0f0" stroke-width="1.3"/></svg><div class="t" style="left:220.5px;top:615.3px;font-size:10.5px;line-height:10px;letter-spacing:0;transform:scale(0.88,1.12);transform-origin:0 50%">W</div><div class="t" style="left:229.5px;top:611.5px;">:16.0G</div><div class="t" style="left:182px;top:632.5px;">50&Omega;</div><div class="t" style="left:214px;top:631.5px;font-size:8.5px;line-height:8px">B</div><svg style="position:absolute;left:222px;top:629.0px" width="6" height="6"><path d="M4.2,0.6 L2.4,4.2" stroke="#f0f0f0" stroke-width="1.3"/></svg><div class="t" style="left:220.5px;top:636.3px;font-size:10.5px;line-height:10px;letter-spacing:0;transform:scale(0.88,1.12);transform-origin:0 50%">W</div><div class="t" style="left:229.5px;top:632.5px;">:16.0G</div><div class="t" style="left:279.5px;top:610.5px;font-size:11.5px">D</div><div class="t" style="left:286.5px;top:615.5px;font-size:11px">S</div><div class="cell" style="left:352px;top:610px;width:86px;height:22px"></div><div class="badge by" style="left:315px;top:613px;width:34px;height:13px;line-height:13px;font-size:10px">t1</div><div class="t" style="left:353.5px;top:614px;">0.0s</div><div class="cell" style="left:352px;top:631px;width:86px;height:22px"></div><div class="badge by" style="left:315px;top:634px;width:34px;height:13px;line-height:13px;font-size:10px">t2</div><div class="t" style="left:353.5px;top:635px;">3.1ns</div><div class="cell" style="left:352px;top:652px;width:86px;height:22px"></div><div class="badge by" style="left:315px;top:655px;width:34px;height:13px;line-height:13px;font-size:10px">&Delta;t</div><div class="t" style="left:353.5px;top:656px;">3.1ns</div><div class="cell" style="left:352px;top:673px;width:86px;height:22px"></div><div class="badge by" style="left:315px;top:676px;width:34px;height:13px;line-height:13px;font-size:10px">1/&Delta;t</div><div class="t" style="left:353.5px;top:677px;">322.581MHz</div><div style="position:absolute;left:597px;top:611px;width:16px;height:15px;background:#cacaca;border:1.5px solid #f09000"></div><div class="t" style="left:599px;top:613.5px;color:#111;font-size:10px;line-height:10px;letter-spacing:0">A&#x2019;</div><div class="badge bc" style="left:615.5px;top:611.5px;width:31px;height:13px;line-height:13px;font-size:10px">C2</div><svg style="position:absolute;left:648px;top:609px" width="20" height="18"><path d="M2.5,14 H6.5 L11.5,3 H15.5" fill="none" stroke="#fff" stroke-width="1.8"/></svg><div class="t" style="left:667px;top:611px;">0.0V</div><div class="t" style="left:789px;top:611.5px;">1.0ns/div</div><div class="t" style="left:854px;top:611.5px;">50.0GS/s</div><div class="t" style="left:913.5px;top:611.5px;">IT</div><div class="t" style="left:939px;top:611.5px;">10.0ps/pt</div><div class="t" style="left:789px;top:632.5px;color:#22e622">Run</div><div class="t" style="left:855px;top:632.5px;">Sample</div><div class="t" style="left:943px;top:632.5px;">NoRef</div><svg style="position:absolute;left:989px;top:630px" width="12" height="20"><rect x="4.3" y="2" width="3.4" height="13" fill="#f0e000"/><circle cx="6" cy="15" r="3.4" fill="#f0e000"/></svg><div class="t" style="left:789px;top:653.5px;">1 247 acqs</div><div class="t" style="left:929px;top:653.5px;">RL:1.0k</div><div class="t" style="left:789px;top:674px;">Auto</div><div class="t" style="left:830.5px;top:674px;">October 30, 2023</div><div class="t" style="left:956.5px;top:674px;color:#f0a020">13:47:51</div><div class="badge by" style="left:30px;top:734px;width:32px;height:13px;line-height:13px;font-size:10px">C1</div><div class="t" style="left:69px;top:735.5px;">Freq*</div><div class="cell" style="left:128px;top:732px;width:70px;height:20px;"></div><div class="t" style="left:128px;top:715.5px;width:69px;text-align:center">Value</div><div class="t" style="left:129.5px;top:735.5px;">798.9MHz</div><div class="cell" style="left:197px;top:732px;width:81px;height:20px;background:#222;"></div><div class="t" style="left:197px;top:715.5px;width:80px;text-align:center">Mean</div><div class="t" style="left:198.5px;top:735.5px;">800.09511M</div><div class="cell" style="left:277px;top:732px;width:71px;height:20px;"></div><div class="t" style="left:277px;top:715.5px;width:70px;text-align:center">Min</div><div class="t" style="left:278.5px;top:735.5px;">798.2M</div><div class="cell" style="left:347px;top:732px;width:71px;height:20px;background:#222;"></div><div class="t" style="left:347px;top:715.5px;width:70px;text-align:center">Max</div><div class="t" style="left:348.5px;top:735.5px;">801.9M</div><div class="cell" style="left:417px;top:732px;width:72px;height:20px;"></div><div class="t" style="left:417px;top:715.5px;width:71px;text-align:center">St Dev</div><div class="t" style="left:418.5px;top:735.5px;">699.2k</div><div class="cell" style="left:488px;top:732px;width:60px;height:20px;"></div><div class="t" style="left:488px;top:715.5px;width:59px;text-align:center">Count</div><div class="t" style="left:489.5px;top:735.5px;">920.0</div><div class="cell" style="left:547px;top:732px;width:38px;height:20px;"></div><div class="t" style="left:547px;top:715.5px;width:37px;text-align:center">Info</div><div class="t" style="left:548.5px;top:735.5px;"></div></body></html>
